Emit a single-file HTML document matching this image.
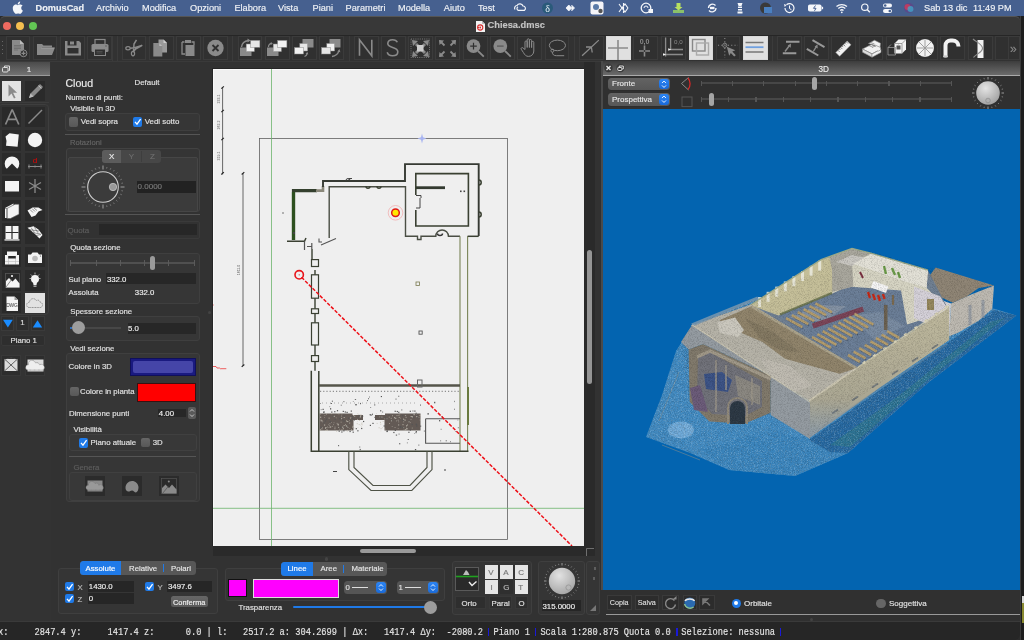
<!DOCTYPE html><html><head><meta charset='utf-8'><style>
*{margin:0;padding:0;box-sizing:border-box}
html,body{width:1024px;height:640px;overflow:hidden;background:#2b2b2b;font-family:"Liberation Sans",sans-serif;}
.a{position:absolute}
.t{position:absolute;white-space:pre;line-height:1;-webkit-text-stroke:0.15px currentColor}
body{-webkit-font-smoothing:antialiased}
#root{position:absolute;left:0;top:0;width:1024px;height:640px;will-change:transform}
svg{position:absolute;overflow:visible}
</style></head><body><div id='root'><div class="a" style="left:0px;top:0px;width:1024px;height:16px;background:#46608f"></div>
<div class="t" style="left:35.6px;top:3.5px;font-size:9.2px;color:#f0f2f6;font-weight:bold">DomusCad</div>
<div class="t" style="left:96px;top:3.5px;font-size:9.2px;color:#f0f2f6;">Archivio</div>
<div class="t" style="left:142px;top:3.5px;font-size:9.2px;color:#f0f2f6;">Modifica</div>
<div class="t" style="left:190px;top:3.5px;font-size:9.2px;color:#f0f2f6;">Opzioni</div>
<div class="t" style="left:234.4px;top:3.5px;font-size:9.2px;color:#f0f2f6;">Elabora</div>
<div class="t" style="left:278px;top:3.5px;font-size:9.2px;color:#f0f2f6;">Vista</div>
<div class="t" style="left:312.5px;top:3.5px;font-size:9.2px;color:#f0f2f6;">Piani</div>
<div class="t" style="left:345.6px;top:3.5px;font-size:9.2px;color:#f0f2f6;">Parametri</div>
<div class="t" style="left:398px;top:3.5px;font-size:9.2px;color:#f0f2f6;">Modella</div>
<div class="t" style="left:443.8px;top:3.5px;font-size:9.2px;color:#f0f2f6;">Aiuto</div>
<div class="t" style="left:478px;top:3.5px;font-size:9.2px;color:#f0f2f6;">Test</div>
<svg style="left:0px;top:0px" width="1024" height="16" viewBox="0 0 1024 16"><path d="M17.8 4.8c-.6.7-1.5 1.2-2.3 1.1-.1-.9.3-1.8.8-2.4.6-.7 1.5-1.1 2.3-1.2.1.9-.3 1.8-.8 2.5zm.8 1.3c-1.2-.1-2.3.7-2.9.7-.6 0-1.5-.7-2.5-.7-1.3 0-2.5.8-3.2 1.9-1.4 2.4-.4 5.9 1 7.8.7.9 1.4 2 2.5 1.9 1-.1 1.4-.6 2.5-.6s1.5.6 2.5.6c1.1 0 1.7-.9 2.4-1.9.7-1.1 1-2.1 1.1-2.2 0 0-2.1-.8-2.1-3.2 0-2 1.6-2.9 1.7-3-1-1.4-2.4-1.5-2.9-1.5z" fill="#f4f6fa" transform="translate(5.3 -0.3) scale(0.8)"/><path d="M515 9.5a2.6 2.6 0 0 1 2-4a3.3 3.3 0 0 1 6 0.5a2.4 2.4 0 0 1 1.5 4.3h-6.5a2 2 0 0 1 0-3.5" fill="none" stroke="#f4f6fa" stroke-width="1.2"/><circle cx="547.5" cy="8" r="5.5" fill="#2a5a7a"/><text x="547.5" y="11.5" text-anchor="middle" font-family="Liberation Serif" font-size="10" fill="#e8f0f8">δ</text><path d="M566 8l2.8-3 2.8 3-2.8 3zM571.5 5l3 3-3 3" fill="#f4f6fa" stroke="#f4f6fa" stroke-width="0.8"/><rect x="590.5" y="1.5" width="13" height="13" rx="2" fill="#f4f4f8"/><circle cx="596" cy="7" r="3" fill="#5a7aa8"/><circle cx="600.5" cy="11" r="2.2" fill="#555"/><path d="M619 4l3 4 3-4 3 4M619 12l3-4 3 4 3-4M623.5 3v10" fill="none" stroke="#f4f6fa" stroke-width="1.1"/><circle cx="646" cy="8" r="4.8" fill="none" stroke="#f4f6fa" stroke-width="1.3"/><path d="M644 8a2 2 0 0 1 4 0" fill="none" stroke="#f4f6fa" stroke-width="1"/><rect x="648.5" y="9" width="4.5" height="4" fill="#f4f6fa"/><path d="M673 10h11v3h-11z" fill="#8ac06a"/><path d="M676.5 3h4v4h2l-4 3.5-4-3.5h2z" fill="#b8e060"/><path d="M708.5 8a4 4 0 0 1 7-2.5M716 8a4 4 0 0 1-7 2.5" fill="none" stroke="#f4f6fa" stroke-width="1.3"/><rect x="710" y="6.8" width="4.5" height="2.4" fill="#f4f6fa"/><path d="M737.5 3h5l-1 3h-3zM738 6.5h4v1.5h-4zM738 9h4v1.5h-4zM737.5 11.5h5v2h-5z" fill="#f4f6fa"/><circle cx="765.5" cy="8" r="5.5" fill="#3a3a3a"/><rect x="764" y="7" width="8" height="6" fill="#4a80c0"/><path d="M785 8a4.5 4.5 0 1 0 1.5-3.3" fill="none" stroke="#f4f6fa" stroke-width="1.2"/><path d="M784 4l2.5 1-1.8 2z" fill="#f4f6fa"/><path d="M789.5 5.5v3l2 1.3" fill="none" stroke="#f4f6fa" stroke-width="1"/><rect x="808" y="4.5" width="13.5" height="7" rx="1.8" fill="#f4f6fa"/><rect x="821.8" y="6.8" width="1.3" height="2.4" fill="#f4f6fa"/><path d="M815.5 5.5l-2 2.8h2.5l-1.5 2.5" fill="none" stroke="#46608f" stroke-width="1"/><path d="M836.5 6.5a8 8 0 0 1 10.5 0M838.3 8.5a5.4 5.4 0 0 1 7 0M840.2 10.4a2.6 2.6 0 0 1 3.3 0" fill="none" stroke="#f4f6fa" stroke-width="1.3"/><circle cx="841.8" cy="12.3" r="0.9" fill="#f4f6fa"/><circle cx="864.8" cy="7.2" r="3.2" fill="none" stroke="#f4f6fa" stroke-width="1.2"/><path d="M867.2 9.6l2.6 2.6" stroke="#f4f6fa" stroke-width="1.4"/><rect x="883" y="3.5" width="9" height="4" rx="2" fill="#f4f6fa"/><rect x="883" y="9" width="9" height="4" rx="2" fill="#f4f6fa"/><circle cx="885.2" cy="5.5" r="1.3" fill="#46608f"/><circle cx="889.8" cy="11" r="1.3" fill="#46608f"/><circle cx="909" cy="8" r="5" fill="#5a4a8a"/><circle cx="907.5" cy="7" r="3" fill="#d23a5a" opacity="0.8"/><circle cx="910.5" cy="9" r="3" fill="#3ab0d0" opacity="0.7"/></svg>
<div class="t" style="left:924px;top:3.5px;font-size:9.2px;color:#f0f2f6;">Sab 13 dic</div>
<div class="t" style="left:973px;top:3.5px;font-size:9.2px;color:#f0f2f6;">11:49 PM</div>
<div class="a" style="left:0px;top:16px;width:1020px;height:19px;background:#383838;border-top:1px solid #555;border-radius:5px 5px 0 0"></div>
<div class="a" style="left:2.5px;top:21.8px;width:8.4px;height:8.4px;background:#ee6a5f;border-radius:50%"></div>
<div class="a" style="left:15.8px;top:21.8px;width:8.4px;height:8.4px;background:#f5be4f;border-radius:50%"></div>
<div class="a" style="left:29.099999999999998px;top:21.8px;width:8.4px;height:8.4px;background:#62c554;border-radius:50%"></div>
<svg style="left:474.5px;top:19.5px" width="11" height="13" viewBox="0 0 11 13"><path d="M1 1h6l3 3v8H1z" fill="#f2f2f2"/><path d="M7 1v3h3z" fill="#bbb"/><circle cx="5.2" cy="7.5" r="2.6" fill="none" stroke="#d83030" stroke-width="1.1"/><circle cx="5.2" cy="7.5" r="0.9" fill="#d83030"/><path d="M2.5 7.5h1.5" stroke="#d83030" stroke-width="1"/></svg>
<div class="t" style="left:487.5px;top:21.3px;font-size:9.3px;color:#c4c4c4;font-weight:bold">Chiesa.dmsc</div>
<div class="a" style="left:0px;top:62px;width:51px;height:560px;background:#333"></div>
<div class="a" style="left:51px;top:62px;width:550px;height:560px;background:#323232"></div>
<div class="a" style="left:0px;top:34.5px;width:1020px;height:1px;background:#262626"></div>
<div class="a" style="left:0px;top:35.5px;width:1020px;height:26px;background:#323232"></div>
<div class="a" style="left:0px;top:60.5px;width:1020px;height:1px;background:#3a3a3a"></div>
<div class="a" style="left:5.5px;top:36px;width:24.5px;height:24px;background:#303030;border:1px solid #3b3b3b"></div>
<svg style="left:5.5px;top:36px" width="25" height="25" viewBox="0 0 25 25"><path d="M6 4h8l4 4v11H6z" fill="#8a8a8a"/><path d="M14 4l4 4h-4z" fill="#bbb"/><path d="M8 9.5h7M8 11h7M8 12.5h7M8 14h4" stroke="#6f6f6f" stroke-width="0.9"/><circle cx="17.5" cy="17.3" r="3.4" fill="#303030" stroke="#8a8a8a" stroke-width="1"/><path d="M17.5 15.3v4M15.5 17.3h4" stroke="#8a8a8a" stroke-width="1.2"/></svg>
<div class="a" style="left:32.5px;top:36px;width:24.5px;height:24px;background:#303030;border:1px solid #3b3b3b"></div>
<svg style="left:32.5px;top:36px" width="25" height="25" viewBox="0 0 25 25"><path d="M4 8h5l1.5 1.5H19v2H9l-2 7.5H4z" fill="#8a8a8a"/><path d="M8 11.5h14l-3 7.5H5z" fill="#8a8a8a"/><path d="M8.2 12.2h13" stroke="#aaa" stroke-width="0.6"/></svg>
<div class="a" style="left:60px;top:36px;width:24.5px;height:24px;background:#303030;border:1px solid #3b3b3b"></div>
<svg style="left:60px;top:36px" width="25" height="25" viewBox="0 0 25 25"><path d="M5 5h14l2 2v12.5H5z" fill="#8a8a8a"/><rect x="7.5" y="5" width="9" height="4.5" fill="#303030"/><rect x="10" y="5.5" width="4" height="3" fill="#8a8a8a"/><rect x="7.5" y="12" width="11" height="5.5" fill="#303030"/></svg>
<div class="a" style="left:87px;top:36px;width:24.5px;height:24px;background:#303030;border:1px solid #3b3b3b"></div>
<svg style="left:87px;top:36px" width="25" height="25" viewBox="0 0 25 25"><rect x="8" y="3.5" width="10" height="5" fill="none" stroke="#8a8a8a" stroke-width="1.2"/><rect x="4.5" y="8" width="17" height="8" rx="1.5" fill="#8a8a8a"/><rect x="7.5" y="13" width="11" height="6.5" fill="#303030" stroke="#8a8a8a" stroke-width="1"/><path d="M9.5 15.5h6M9.5 17h6" stroke="#555" stroke-width="0.8"/><circle cx="19" cy="10" r="0.7" fill="#555"/></svg>
<div class="a" style="left:121.5px;top:36px;width:24.5px;height:24px;background:#303030;border:1px solid #3b3b3b"></div>
<svg style="left:121.5px;top:36px" width="25" height="25" viewBox="0 0 25 25"><ellipse cx="6" cy="12.3" rx="2.2" ry="1.6" fill="none" stroke="#8a8a8a" stroke-width="1.2"/><ellipse cx="11" cy="17.6" rx="1.6" ry="2.2" fill="none" stroke="#8a8a8a" stroke-width="1.2"/><path d="M8.2 12.2L12.5 11.8L19.8 9.5L13.5 13.2L11.5 15.4L12 8L14.5 3.8" fill="none" stroke="#8a8a8a" stroke-width="1.5" stroke-linejoin="round"/></svg>
<div class="a" style="left:149px;top:36px;width:24.5px;height:24px;background:#303030;border:1px solid #3b3b3b"></div>
<svg style="left:149px;top:36px" width="25" height="25" viewBox="0 0 25 25"><path d="M9.5 3.5h5l3.5 3.5v9.5H9.5z" fill="#9a9a9a"/><path d="M14.5 3.5v3.5h3.5z" fill="#ccc"/><path d="M4.3 7h6l3 3v10.5h-9z" fill="#8a8a8a"/><path d="M10.3 7v3h3z" fill="#bbb"/></svg>
<div class="a" style="left:176px;top:36px;width:24.5px;height:24px;background:#303030;border:1px solid #3b3b3b"></div>
<svg style="left:176px;top:36px" width="25" height="25" viewBox="0 0 25 25"><path d="M6 6h2.5M15.5 6H18v3M6 6v12h3" stroke="#8a8a8a" stroke-width="1.3" fill="none"/><rect x="9" y="4" width="6" height="3" fill="#8a8a8a"/><rect x="9.5" y="9" width="9" height="11" fill="#8a8a8a"/></svg>
<div class="a" style="left:203px;top:36px;width:24.5px;height:24px;background:#303030;border:1px solid #3b3b3b"></div>
<svg style="left:203px;top:36px" width="25" height="25" viewBox="0 0 25 25"><circle cx="12.5" cy="12" r="8.2" fill="#8a8a8a"/><path d="M9.5 9l6 6M15.5 9l-6 6" stroke="#303030" stroke-width="1.8"/></svg>
<div class="a" style="left:237.5px;top:36px;width:24.5px;height:24px;background:#303030;border:1px solid #3b3b3b"></div>
<svg style="left:237.5px;top:36px" width="25" height="25" viewBox="0 0 25 25"><rect x="2" y="11.5" width="11.5" height="8.5" fill="#8a8a8a"/><rect x="8.2" y="8" width="8.2" height="7.6" fill="#f2f2f2" stroke="#888" stroke-width="0.5"/><rect x="12.6" y="4.4" width="9.3" height="6.9" fill="#e6e6e6" stroke="#888" stroke-width="0.5"/><path d="M3.5 11C4 7 7 5 10.5 4.5" stroke="#8a8a8a" stroke-width="1.5" fill="none"/><path d="M9.5 2.5l3 2-3 2z" fill="#8a8a8a"/></svg>
<div class="a" style="left:265px;top:36px;width:24.5px;height:24px;background:#303030;border:1px solid #3b3b3b"></div>
<svg style="left:265px;top:36px" width="25" height="25" viewBox="0 0 25 25"><rect x="2" y="11.5" width="11.5" height="8.5" fill="#8a8a8a"/><rect x="8.2" y="8" width="8.2" height="7.6" fill="#e6e6e6" stroke="#888" stroke-width="0.5"/><rect x="12.6" y="4.4" width="9.3" height="6.9" fill="#f2f2f2" stroke="#888" stroke-width="0.5"/><path d="M3.5 11C3.5 9 5 7.5 6.5 7.5" stroke="#8a8a8a" stroke-width="1.3" fill="none"/><path d="M5.8 6l2 1.5-2 1.5z" fill="#8a8a8a"/></svg>
<div class="a" style="left:292px;top:36px;width:24.5px;height:24px;background:#303030;border:1px solid #3b3b3b"></div>
<svg style="left:292px;top:36px" width="25" height="25" viewBox="0 0 25 25"><rect x="10.5" y="3" width="11" height="8.5" fill="#8a8a8a"/><rect x="7.8" y="7.5" width="7.8" height="7.5" fill="#e6e6e6" stroke="#888" stroke-width="0.5"/><rect x="2.5" y="11.5" width="9" height="6.5" fill="#f2f2f2" stroke="#888" stroke-width="0.5"/><path d="M12.5 20.5C14 20 14.8 19 15.2 17.5" stroke="#8a8a8a" stroke-width="1.2" fill="none"/><path d="M13.5 17.5l2-1.5.8 2.5z" fill="#8a8a8a"/></svg>
<div class="a" style="left:319px;top:36px;width:24.5px;height:24px;background:#303030;border:1px solid #3b3b3b"></div>
<svg style="left:319px;top:36px" width="25" height="25" viewBox="0 0 25 25"><rect x="10.5" y="3" width="11" height="8.5" fill="#8a8a8a"/><rect x="7.8" y="7.5" width="7.8" height="7.5" fill="#f2f2f2" stroke="#888" stroke-width="0.5"/><rect x="2.5" y="11.5" width="9" height="6.5" fill="#e6e6e6" stroke="#888" stroke-width="0.5"/><path d="M13 20.5C17 20 19 17.5 20 15" stroke="#8a8a8a" stroke-width="1.3" fill="none"/><path d="M18.3 15.5l2.2-2.5.8 3.2z" fill="#8a8a8a"/></svg>
<div class="a" style="left:354px;top:36px;width:24.5px;height:24px;background:#303030;border:1px solid #3b3b3b"></div>
<svg style="left:354px;top:36px" width="25" height="25" viewBox="0 0 25 25"><path d="M5.5 19.8V3.8L17.8 19.8V3.8" fill="none" stroke="#8a8a8a" stroke-width="1.6"/></svg>
<div class="a" style="left:381px;top:36px;width:24.5px;height:24px;background:#303030;border:1px solid #3b3b3b"></div>
<svg style="left:381px;top:36px" width="25" height="25" viewBox="0 0 25 25"><path d="M16.3 6.3C15.5 4.5 13.8 3.7 11.6 3.7C8.6 3.7 6.8 5.3 6.8 7.6C6.8 12.5 16.8 10.5 16.8 15.7C16.8 18.2 14.6 19.8 11.5 19.8C8.8 19.8 6.8 18.5 6.2 16.3" fill="none" stroke="#8a8a8a" stroke-width="1.6"/></svg>
<div class="a" style="left:408px;top:36px;width:24.5px;height:24px;background:#303030;border:1px solid #3b3b3b"></div>
<svg style="left:408px;top:36px" width="25" height="25" viewBox="0 0 25 25"><rect x="3" y="3" width="18.5" height="18.5" fill="none" stroke="#8a8a8a" stroke-width="0.8" stroke-dasharray="1 1.2"/><path d="M4 4l6 1-5 5z M21 4l-1 6-5-5z M4 21l1-6 5 5z M21 21l-6-1 5-5z" fill="#8a8a8a"/><path d="M8 8l9 9M17 8l-9 9" stroke="#8a8a8a" stroke-width="3"/><rect x="9" y="9" width="6.5" height="6.5" fill="#ccc"/></svg>
<div class="a" style="left:435px;top:36px;width:24.5px;height:24px;background:#303030;border:1px solid #3b3b3b"></div>
<svg style="left:435px;top:36px" width="25" height="25" viewBox="0 0 25 25"><path d="M4 4l5 0.5-4.5 4.5z M21 4l-0.5 5-4.5-4.5z M4 21l0.5-5 4.5 4.5z M21 21l-5-0.5 4.5-4.5z" fill="#8a8a8a"/><path d="M5 5l4.5 4.5M20 5l-4.5 4.5M5 20l4.5-4.5M20 20l-4.5-4.5" stroke="#8a8a8a" stroke-width="1.8"/></svg>
<div class="a" style="left:463px;top:36px;width:24.5px;height:24px;background:#303030;border:1px solid #3b3b3b"></div>
<svg style="left:463px;top:36px" width="25" height="25" viewBox="0 0 25 25"><path d="M15 15l5.8 5.6" stroke="#8a8a8a" stroke-width="1.8"/><circle cx="10.5" cy="10.1" r="6.9" fill="#8a8a8a"/><path d="M10.5 6.8v6.6M7.2 10.1h6.6" stroke="#303030" stroke-width="1.2"/></svg>
<div class="a" style="left:490px;top:36px;width:24.5px;height:24px;background:#303030;border:1px solid #3b3b3b"></div>
<svg style="left:490px;top:36px" width="25" height="25" viewBox="0 0 25 25"><path d="M15 15l5.8 5.6" stroke="#8a8a8a" stroke-width="1.8"/><circle cx="10.3" cy="10.1" r="6.9" fill="#8a8a8a"/><path d="M7 10.1h6.6" stroke="#555" stroke-width="1.2"/></svg>
<div class="a" style="left:517px;top:36px;width:24.5px;height:24px;background:#303030;border:1px solid #3b3b3b"></div>
<svg style="left:517px;top:36px" width="25" height="25" viewBox="0 0 25 25"><path d="M8 13.5V6a1.1 1.1 0 0 1 2.2 0V11.5V3.9a1.1 1.1 0 0 1 2.2 0V11.5V4.6a1.1 1.1 0 0 1 2.2 0v7V6.5a1.1 1.1 0 0 1 2.2 0v8.5c0 3-2.2 5.4-5.2 5.4c-2.6 0-3.8-1.4-5.3-4l-2.1-3.2a1.1 1.1 0 0 1 1.9-1.1z" fill="none" stroke="#8a8a8a" stroke-width="1"/></svg>
<div class="a" style="left:544.5px;top:36px;width:24.5px;height:24px;background:#303030;border:1px solid #3b3b3b"></div>
<svg style="left:544.5px;top:36px" width="25" height="25" viewBox="0 0 25 25"><ellipse cx="12.4" cy="9.4" rx="8.1" ry="5.3" fill="none" stroke="#8a8a8a" stroke-width="1"/><circle cx="7.4" cy="14.7" r="1.5" fill="none" stroke="#8a8a8a" stroke-width="0.9"/><path d="M7.4 16.2c0 2.5 1.5 3.5 4 3.5h7.8" fill="none" stroke="#8a8a8a" stroke-width="1"/></svg>
<div class="a" style="left:579px;top:36px;width:24.5px;height:24px;background:#303030;border:1px solid #3b3b3b"></div>
<svg style="left:579px;top:36px" width="25" height="25" viewBox="0 0 25 25"><path d="M3.1 19.8L19.8 4.1M7 11h6M12.3 10.5L13.2 16.5" fill="none" stroke="#8a8a8a" stroke-width="1.3"/></svg>
<div class="a" style="left:606px;top:36px;width:24.5px;height:24px;background:#e0e0e0;border:1px solid #d8d8d8"></div>
<svg style="left:606px;top:36px" width="25" height="25" viewBox="0 0 25 25"><path d="M12 4v20M2 12h20" stroke="#8a8a8a" stroke-width="1.6"/></svg>
<div class="a" style="left:633px;top:36px;width:24.5px;height:24px;background:#303030;border:1px solid #3b3b3b"></div>
<svg style="left:633px;top:36px" width="25" height="25" viewBox="0 0 25 25"><path d="M11.5 9.5v11M6 15h11" stroke="#8a8a8a" stroke-width="1.6"/><circle cx="11.5" cy="15" r="0.9" fill="#333"/><text x="11.5" y="8.3" text-anchor="middle" font-family="Liberation Sans" font-size="7" font-weight="bold" fill="#8a8a8a">0,0</text></svg>
<div class="a" style="left:661px;top:36px;width:24.5px;height:24px;background:#303030;border:1px solid #3b3b3b"></div>
<svg style="left:661px;top:36px" width="25" height="25" viewBox="0 0 25 25"><path d="M4.6 1.5V20.5M2.8 18.5H22M9.6 2V13.5H22" fill="none" stroke="#8a8a8a" stroke-width="1.3"/><path d="M2 17.3l3.2 1.2-3.2 1.2zM7.2 12.3l3.2 1.2-3.2 1.2z" fill="#f2f2f2"/><text x="17.3" y="8.3" text-anchor="middle" font-family="Liberation Sans" font-size="6.2" fill="#8a8a8a">0,0</text></svg>
<div class="a" style="left:688.5px;top:36px;width:24.5px;height:24px;background:#e0e0e0;border:1px solid #d8d8d8"></div>
<svg style="left:688.5px;top:36px" width="25" height="25" viewBox="0 0 25 25"><rect x="3.5" y="3.5" width="12.5" height="11.5" fill="none" stroke="#888" stroke-width="1.4"/><rect x="7.5" y="7" width="12" height="12" fill="none" stroke="#aaa" stroke-width="1.4"/></svg>
<div class="a" style="left:715.5px;top:36px;width:24.5px;height:24px;background:#303030;border:1px solid #3b3b3b"></div>
<svg style="left:715.5px;top:36px" width="25" height="25" viewBox="0 0 25 25"><path d="M2 9.3h20M8.8 2v20" stroke="#8a8a8a" stroke-width="1.1" stroke-dasharray="1.1 2.2"/><circle cx="8.8" cy="9.3" r="2.1" fill="none" stroke="#8a8a8a" stroke-width="0.9"/><path d="M10.8 10.8L19.3 14.2L16.3 15.6L19.8 19.2L18.2 20.6L14.8 17L13.2 19.8z" fill="#8a8a8a"/></svg>
<div class="a" style="left:743px;top:36px;width:24.5px;height:24px;background:#e0e0e0;border:1px solid #d8d8d8"></div>
<svg style="left:743px;top:36px" width="25" height="25" viewBox="0 0 25 25"><path d="M2.5 6.5h18M2.5 16h18" stroke="#777" stroke-width="1.4"/><path d="M2.5 11.2h18" stroke="#6fa0e0" stroke-width="1.8"/></svg>
<div class="a" style="left:777px;top:36px;width:24.5px;height:24px;background:#303030;border:1px solid #3b3b3b"></div>
<svg style="left:777px;top:36px" width="25" height="25" viewBox="0 0 25 25"><path d="M9 5.8h13.5M5.8 17.2h13.5" stroke="#999" stroke-width="2"/><path d="M8 15.5L12.5 9.5" stroke="#8a8a8a" stroke-width="1.4"/><path d="M14 7.5l-0.3 4.3-3-2.2z" fill="#8a8a8a"/></svg>
<div class="a" style="left:804.4px;top:36px;width:24.5px;height:24px;background:#303030;border:1px solid #3b3b3b"></div>
<svg style="left:804.4px;top:36px" width="25" height="25" viewBox="0 0 25 25"><path d="M8.5 4.2L20.5 11.2M2.8 12.8L14.3 19.5" stroke="#999" stroke-width="2"/><path d="M9.3 15.5L12.5 10.3" stroke="#8a8a8a" stroke-width="1.4"/><path d="M13.5 8.3l0.2 4.3-3.1-1.8z" fill="#8a8a8a"/></svg>
<div class="a" style="left:831px;top:36px;width:24.5px;height:24px;background:#303030;border:1px solid #3b3b3b"></div>
<svg style="left:831px;top:36px" width="25" height="25" viewBox="0 0 25 25"><path d="M4.8 16.5L16.2 5l3.8 3.8L8.6 20.3z" fill="#f2f2f2" stroke="#999" stroke-width="0.6"/><path d="M7 14.3l1.6 1.6M8.4 12.9l1 1M9.8 11.5l1.6 1.6M11.2 10.1l1 1M12.6 8.7l1.6 1.6M14 7.3l1 1M15.4 5.9l1.6 1.6" stroke="#555" stroke-width="0.7"/></svg>
<div class="a" style="left:858.5px;top:36px;width:24.5px;height:24px;background:#303030;border:1px solid #3b3b3b"></div>
<svg style="left:858.5px;top:36px" width="25" height="25" viewBox="0 0 25 25"><path d="M3.5 13l9-4.5 9.5 4.5-9 4.8z" fill="#f2f2f2" stroke="#888" stroke-width="0.6"/><path d="M3.5 13v3.2l9.5 5v-3.3z" fill="#ddd" stroke="#888" stroke-width="0.6"/><path d="M13 18v3.2l9-4.8v-3.2z" fill="#f2f2f2" stroke="#888" stroke-width="0.6"/><path d="M9.5 7.5l6-3.3 6 3-0.5 4.5-5.5-2.5z" fill="#f2f2f2" stroke="#888" stroke-width="0.6"/><path d="M9.5 9.5l4 1.5M10.5 8l4 1.5M11.5 6.5l4 1.5M13 11.5l3-1.5" stroke="#666" stroke-width="0.6"/><path d="M16 9l5.5 2.5v2.5l-2.5 1.3" fill="#f2f2f2" stroke="#888" stroke-width="0.6"/></svg>
<div class="a" style="left:886px;top:36px;width:24.5px;height:24px;background:#303030;border:1px solid #3b3b3b"></div>
<svg style="left:886px;top:36px" width="25" height="25" viewBox="0 0 25 25"><path d="M12.5 3.5h7.5v10l-4 4h-7.5v-10z" fill="#f2f2f2"/><path d="M8.5 7.5h7.5v10M16 7.5l4-4" stroke="#888" stroke-width="0.8" fill="none"/><rect x="10.5" y="9.5" width="4" height="4" fill="#555"/><path d="M2 11.5h7.5v7.5H2zM2 11.5l3-3M9.5 11.5l3-3" stroke="#999" stroke-width="0.8" fill="none"/></svg>
<div class="a" style="left:913px;top:36px;width:24.5px;height:24px;background:#303030;border:1px solid #3b3b3b"></div>
<svg style="left:913px;top:36px" width="25" height="25" viewBox="0 0 25 25"><circle cx="12" cy="12" r="9" fill="#f2f2f2"/><path d="M12 3.5v17M3.5 12h17M6 6l12 12M18 6L6 18" stroke="#999" stroke-width="0.9"/></svg>
<div class="a" style="left:940px;top:36px;width:24.5px;height:24px;background:#303030;border:1px solid #3b3b3b"></div>
<svg style="left:940px;top:36px" width="25" height="25" viewBox="0 0 25 25"><path d="M5.5 21V9.5a5 5 0 0 1 5-5h2a6 6 0 0 1 6 6" fill="none" stroke="#f2f2f2" stroke-width="4"/><ellipse cx="5.5" cy="20.5" rx="2.5" ry="1.2" fill="#ccc"/></svg>
<div class="a" style="left:968px;top:36px;width:24.5px;height:24px;background:#303030;border:1px solid #3b3b3b"></div>
<svg style="left:968px;top:36px" width="25" height="25" viewBox="0 0 25 25"><rect x="9.5" y="4" width="6" height="18" fill="#f2f2f2"/><path d="M5 3c3 3 9 5 9.5 9S8 18 5.5 21.5" fill="none" stroke="#8a8a8a" stroke-width="1.1"/></svg>
<div class="a" style="left:995px;top:36px;width:24.5px;height:24px;background:#303030;border:1px solid #3b3b3b"></div>
<div class="a" style="left:1008px;top:36px;width:12px;height:24px;background:#303030;border:1px solid #3b3b3b"></div>
<div class="a" style="left:112px;top:36px;width:1px;height:24.5px;background:#3b3b3b"></div>
<div class="a" style="left:116.5px;top:36px;width:1px;height:24.5px;background:#3b3b3b"></div>
<div class="a" style="left:232px;top:36px;width:1px;height:24.5px;background:#3b3b3b"></div>
<div class="a" style="left:348.5px;top:36px;width:1px;height:24.5px;background:#3b3b3b"></div>
<div class="a" style="left:573.5px;top:36px;width:1px;height:24.5px;background:#3b3b3b"></div>
<div class="a" style="left:772px;top:36px;width:1px;height:24.5px;background:#3b3b3b"></div>
<div class="a" style="left:2.2px;top:41px;width:1px;height:1px;background:#666"></div>
<div class="a" style="left:2.2px;top:45px;width:1px;height:1px;background:#666"></div>
<div class="a" style="left:2.2px;top:49px;width:1px;height:1px;background:#666"></div>
<div class="a" style="left:2.2px;top:53px;width:1px;height:1px;background:#666"></div>
<div class="t" style="left:1010px;top:43px;font-size:12px;color:#888;">»</div>
<div class="a" style="left:0px;top:62.2px;width:50px;height:13.6px;background:linear-gradient(#4b4b4b,#727272);border-bottom:1px solid #9a9a9a"></div>
<div class="a" style="left:0px;top:102px;width:49px;height:1px;background:#3c3c3c"></div>
<svg style="left:1px;top:64px" width="10" height="10" viewBox="0 0 10 10"><rect x="1.5" y="3.5" width="5.5" height="4.5" rx="1" fill="none" stroke="#ddd" stroke-width="1"/><path d="M3.5 3V2h5v4.5h-1" fill="none" stroke="#ddd" stroke-width="1"/></svg>
<div class="t" style="left:26.8px;top:66.43px;font-size:8px;color:#e8e8e8;">1</div>
<div class="a" style="left:-2px;top:103.5px;width:50.5px;height:211px;border:1px solid #3e3e3e;border-radius:4px"></div>
<div class="a" style="left:1.5px;top:80.5px;width:19.8px;height:20.5px;background:#e2e2e2"></div>
<svg style="left:1.5px;top:80.5px" width="20" height="20" viewBox="0 0 20 20"><path d="M6.5 3.5v12l3-3 2.5 5 1.6-.8-2.5-5h4z" fill="#8a8a8a"/></svg>
<div class="a" style="left:25px;top:80.5px;width:19.8px;height:20.5px;background:#2a2a2a"></div>
<svg style="left:25px;top:80.5px" width="20" height="20" viewBox="0 0 20 20"><path d="M4 17l1.5-4.5L15 3l3 3-9.5 9.5z" fill="#8a8a8a"/><path d="M4 17l1.5-4.5 3 3z" fill="#bbb"/><path d="M13.5 4.5l3 3" stroke="#ccc" stroke-width="0.8"/></svg>
<div class="a" style="left:1.5px;top:106.5px;width:19.8px;height:20.5px;background:#2a2a2a"></div>
<svg style="left:1.5px;top:106.5px" width="20" height="20" viewBox="0 0 20 20"><path d="M3.5 17.5L10 3h0.4L16.8 17.5M5.8 12.3h9" fill="none" stroke="#8a8a8a" stroke-width="1.7"/></svg>
<div class="a" style="left:25px;top:106.5px;width:19.8px;height:20.5px;background:#2a2a2a"></div>
<svg style="left:25px;top:106.5px" width="20" height="20" viewBox="0 0 20 20"><path d="M3.5 16.5L17 3" stroke="#8a8a8a" stroke-width="1.5"/></svg>
<div class="a" style="left:1.5px;top:130px;width:19.8px;height:20.5px;background:#2a2a2a"></div>
<svg style="left:1.5px;top:130px" width="20" height="20" viewBox="0 0 20 20"><path d="M3.5 6.5L7.5 3.3L16.8 4.5L15.6 16.8L4 15.8L4.5 11z" fill="#f4f4f4"/></svg>
<div class="a" style="left:25px;top:130px;width:19.8px;height:20.5px;background:#2a2a2a"></div>
<svg style="left:25px;top:130px" width="20" height="20" viewBox="0 0 20 20"><circle cx="10" cy="10" r="7.2" fill="#f4f4f4"/></svg>
<div class="a" style="left:1.5px;top:153px;width:19.8px;height:20.5px;background:#2a2a2a"></div>
<svg style="left:1.5px;top:153px" width="20" height="20" viewBox="0 0 20 20"><path d="M4.8 15.8A7.3 7.3 0 1 1 15.2 15.8L10 10.5z" fill="#f4f4f4"/></svg>
<div class="a" style="left:25px;top:153px;width:19.8px;height:20.5px;background:#2a2a2a"></div>
<svg style="left:25px;top:153px" width="20" height="20" viewBox="0 0 20 20"><path d="M3 13.5h14M4 11.5v4M16 11.5v4M10 12.5v2" stroke="#8a8a8a" stroke-width="1"/><text x="10" y="10" text-anchor="middle" font-family="Liberation Sans" font-size="8" fill="#e00">d</text></svg>
<div class="a" style="left:1.5px;top:176px;width:19.8px;height:20.5px;background:#2a2a2a"></div>
<svg style="left:1.5px;top:176px" width="20" height="20" viewBox="0 0 20 20"><rect x="3" y="5" width="14" height="10.5" fill="#f4f4f4"/></svg>
<div class="a" style="left:25px;top:176px;width:19.8px;height:20.5px;background:#2a2a2a"></div>
<svg style="left:25px;top:176px" width="20" height="20" viewBox="0 0 20 20"><path d="M10 3v14M4 6.5l12 7M4 13.5l12-7" stroke="#8a8a8a" stroke-width="1.3"/></svg>
<div class="a" style="left:1.5px;top:200px;width:19.8px;height:20.5px;background:#2a2a2a"></div>
<svg style="left:1.5px;top:200px" width="20" height="20" viewBox="0 0 20 20"><path d="M3 8l8.5-4.5v10L5 18H3z" fill="#f4f4f4"/><path d="M5 8.5l8-4.3H17v10L8.5 18.5H5z" fill="#f4f4f4" stroke="#555" stroke-width="0.6"/><path d="M5 8.5v10M5 8.5H3" stroke="#555" stroke-width="0.6"/></svg>
<div class="a" style="left:25px;top:200px;width:19.8px;height:20.5px;background:#2a2a2a"></div>
<svg style="left:25px;top:200px" width="20" height="20" viewBox="0 0 20 20"><path d="M2.5 10.5l5-3h6l4 2.5-4 1.5-3 4-4 1.5z" fill="#f4f4f4"/><path d="M5 9.5l3 3M7 8.5l3 3M9 8l3 2.5" stroke="#666" stroke-width="0.7"/></svg>
<div class="a" style="left:1.5px;top:223px;width:19.8px;height:20.5px;background:#2a2a2a"></div>
<svg style="left:1.5px;top:223px" width="20" height="20" viewBox="0 0 20 20"><rect x="3.5" y="3" width="13" height="13" fill="#f4f4f4"/><path d="M10 3v13M3.5 9.5h13" stroke="#2a2a2a" stroke-width="1.2"/><rect x="2.5" y="16" width="15" height="1.8" fill="#bbb"/></svg>
<div class="a" style="left:25px;top:223px;width:19.8px;height:20.5px;background:#2a2a2a"></div>
<svg style="left:25px;top:223px" width="20" height="20" viewBox="0 0 20 20"><path d="M2.5 4.8L8.5 3.2L13.5 6.5L17.5 12L14.5 15.5L10.5 11.5L6.5 8z" fill="#f4f4f4"/><path d="M6 4.5l3.5 5M9.5 4.3l3.5 5.5M3.5 6.5l10.5 1.5M7 9.5l8.5 1.5M11 12.5l5 -1" stroke="#555" stroke-width="0.6"/></svg>
<div class="a" style="left:1.5px;top:246.5px;width:19.8px;height:20.5px;background:#2a2a2a"></div>
<svg style="left:1.5px;top:246.5px" width="20" height="20" viewBox="0 0 20 20"><path d="M5 4.5h10v4.5H5z" fill="#f4f4f4"/><path d="M3 8h3.2v9.5H3zM13.8 8H17v9.5h-3.2z" fill="#f4f4f4"/><path d="M6.2 11.5h7.6v6H6.2z" fill="#f4f4f4"/><path d="M3 14.5h14" stroke="#bbb" stroke-width="0.6"/></svg>
<div class="a" style="left:25px;top:246.5px;width:19.8px;height:20.5px;background:#2a2a2a"></div>
<svg style="left:25px;top:246.5px" width="20" height="20" viewBox="0 0 20 20"><path d="M3 7.5h3l1.5-2h5L14 7.5h3V16H3z" fill="#f4f4f4"/><circle cx="10" cy="11.5" r="2.8" fill="#bbb"/><circle cx="15.5" cy="9" r="0.6" fill="#555"/></svg>
<div class="a" style="left:1.5px;top:270px;width:19.8px;height:20.5px;background:#2a2a2a"></div>
<svg style="left:1.5px;top:270px" width="20" height="20" viewBox="0 0 20 20"><rect x="3.5" y="3.5" width="14" height="14" fill="none" stroke="#555" stroke-width="0.8"/><path d="M4 17.5V11l3-3 3.5 3.5 3-3 4 5v4z" fill="#f4f4f4"/><circle cx="10" cy="6" r="1.1" fill="#f4f4f4"/><path d="M4 17l6-8" stroke="#444" stroke-width="0.6"/></svg>
<div class="a" style="left:25px;top:270px;width:19.8px;height:20.5px;background:#2a2a2a"></div>
<svg style="left:25px;top:270px" width="20" height="20" viewBox="0 0 20 20"><circle cx="10" cy="9" r="4" fill="#f4f4f4"/><path d="M7.8 11.5h4.4l-.7 3.5h-3z" fill="#f4f4f4"/><rect x="8.5" y="15.5" width="3" height="1.3" fill="#bbb"/><path d="M10 2.5v2M4.5 8.5h2M13.5 8.5h2M5.8 4.5l1.3 1.3M14.2 4.5l-1.3 1.3" stroke="#ccc" stroke-width="0.8"/></svg>
<div class="a" style="left:1.5px;top:292.5px;width:19.8px;height:20.5px;background:#2a2a2a"></div>
<svg style="left:1.5px;top:292.5px" width="20" height="20" viewBox="0 0 20 20"><path d="M4.5 3.5h8l3.5 3.5v11h-11.5z" fill="#f4f4f4"/><path d="M12.5 3.5v3.5h3.5z" fill="#999"/><text x="10" y="14" text-anchor="middle" font-family="Liberation Sans" font-size="4.8" fill="#333">DWG</text></svg>
<div class="a" style="left:25px;top:292.5px;width:19.8px;height:20.5px;background:#e2e2e2"></div>
<svg style="left:25px;top:292.5px" width="20" height="20" viewBox="0 0 20 20"><path d="M4 14.5a2.6 2.6 0 0 1 0.5-5.2a3.6 3.6 0 0 1 6.8-1.7a2.6 2.6 0 0 1 4 1.8a2.6 2.6 0 0 1 0.3 5.1z" fill="none" stroke="#777" stroke-width="0.8" stroke-dasharray="1 0.6"/></svg>
<div class="a" style="left:0.5px;top:315.5px;width:13.5px;height:15.8px;background:#2e2e2e;border:1px solid #3a3a3a"></div>
<div class="a" style="left:15.8px;top:315.5px;width:13.7px;height:15.8px;background:#2e2e2e;border:1px solid #3a3a3a"></div>
<div class="a" style="left:30.8px;top:315.5px;width:13.999999999999996px;height:15.8px;background:#2e2e2e;border:1px solid #3a3a3a"></div>
<svg style="left:0px;top:315.5px" width="45" height="16" viewBox="0 0 45 16"><path d="M3 3.8h9.8L7.9 11.5z" fill="#1a8cff"/><path d="M32.8 11.5h9.4L37.5 4.3z" fill="#1a8cff"/></svg>
<div class="t" style="left:20.3px;top:319.43px;font-size:8px;color:#ddd;">1</div>
<div class="a" style="left:1px;top:334.9px;width:43.8px;height:11.1px;background:#2e2e2e;border:1px solid #383838;border-radius:2px"></div>
<div class="t" style="left:10.5px;top:336.8px;font-size:7.8px;color:#e0e0e0;">Piano 1</div>
<div class="a" style="left:1px;top:354.8px;width:20.3px;height:20.8px;background:#2d2d2d;border:1px solid #383838"></div>
<div class="a" style="left:24.6px;top:354.8px;width:20.4px;height:20.8px;background:#2d2d2d;border:1px solid #383838"></div>
<svg style="left:1px;top:355px" width="20" height="20" viewBox="0 0 20 20"><rect x="3.5" y="4" width="13" height="12" fill="#ddd"/><path d="M3.5 4l13 12M16.5 4l-13 12" stroke="#444" stroke-width="0.8"/><path d="M3.5 7a6.5 4 0 0 1 13 0" fill="none" stroke="#777" stroke-width="0.6" stroke-dasharray="0.8 0.6"/></svg>
<svg style="left:24.6px;top:355px" width="20" height="20" viewBox="0 0 20 20"><rect x="2.5" y="4.5" width="16" height="12" fill="#ddd"/><path d="M3 15a2.6 2.6 0 0 1 0.5-5.2a3.6 3.6 0 0 1 7-1.7a2.6 2.6 0 0 1 4 1.8a2.6 2.6 0 0 1 3.5 5.1z" fill="#eee" stroke="#666" stroke-width="0.6" stroke-dasharray="0.8 0.5"/></svg>
<div class="t" style="left:65.4px;top:77.83px;font-size:10.6px;color:#ececec;">Cloud</div>
<div class="t" style="left:134.6px;top:78.85px;font-size:7.85px;color:#e2e2e2;">Default</div>
<div class="t" style="left:65.6px;top:93.6px;font-size:7.8px;color:#e2e2e2;">Numero di punti:</div>
<div class="t" style="left:70.3px;top:104.8px;font-size:7.8px;color:#e2e2e2;">Visibile in 3D</div>
<div class="a" style="left:65.4px;top:113.2px;width:134.3px;height:17.5px;background:#363636;border:1px solid #3f3f3f;border-radius:3px"></div>
<div class="a" style="left:68.7px;top:117.2px;width:9.2px;height:9.4px;background:linear-gradient(#666,#585858);border-radius:2px"></div>
<div class="t" style="left:80.7px;top:118.41px;font-size:7.9px;color:#e2e2e2;">Vedi sopra</div>
<div class="a" style="left:132.9px;top:117.3px;width:9.2px;height:9.4px;background:#1f7ae8;border-radius:2px"></div>
<svg style="left:132.9px;top:117.3px" width="9.2" height="9.4" viewBox="0 0 9.2 9.4"><path d="M2 4.8l2 2.4 3.6-5" fill="none" stroke="#fff" stroke-width="1.3"/></svg>
<div class="t" style="left:144.7px;top:118.41px;font-size:7.9px;color:#e2e2e2;">Vedi sotto</div>
<div class="a" style="left:65.4px;top:134px;width:134.3px;height:1.2px;background:#555"></div>
<div class="t" style="left:70px;top:138.72px;font-size:7.6px;color:#666;">Rotazioni</div>
<div class="a" style="left:65.6px;top:147.5px;width:134.1px;height:64px;background:#353535;border:1px solid #424242;border-radius:3px"></div>
<div class="a" style="left:67.5px;top:156.5px;width:130.5px;height:55px;background:#3b3b3b;border:1px solid #464646;border-radius:2px"></div>
<div class="a" style="left:102.25px;top:149.6px;width:58.75px;height:13.2px;background:#474747;border-radius:3px"></div>
<div class="a" style="left:102.25px;top:149.6px;width:19px;height:13.2px;background:#5c5c5c;border-radius:3px 0 0 3px"></div>
<div class="a" style="left:141.3px;top:150.5px;width:0.8px;height:11.5px;background:#3e3e3e"></div>
<div class="t" style="left:109px;top:153.13px;font-size:8px;color:#f0f0f0;">X</div>
<div class="t" style="left:128.8px;top:153.13px;font-size:8px;color:#6e6e6e;">Y</div>
<div class="t" style="left:150px;top:153.13px;font-size:8px;color:#6e6e6e;">Z</div>
<svg style="left:82.9px;top:166.9px" width="40" height="40" viewBox="0 0 40 40"><path d="M37.50 20.00L41.50 20.00" stroke="#8a8a8a" stroke-width="1.3"/><path d="M38.44 23.67L39.91 23.96" stroke="#8a8a8a" stroke-width="0.8"/><path d="M37.37 27.19L38.75 27.77" stroke="#8a8a8a" stroke-width="0.8"/><path d="M35.63 30.44L36.88 31.28" stroke="#8a8a8a" stroke-width="0.8"/><path d="M33.29 33.29L34.35 34.35" stroke="#8a8a8a" stroke-width="0.8"/><path d="M30.44 35.63L31.28 36.88" stroke="#8a8a8a" stroke-width="0.8"/><path d="M27.19 37.37L27.77 38.75" stroke="#8a8a8a" stroke-width="0.8"/><path d="M23.67 38.44L23.96 39.91" stroke="#8a8a8a" stroke-width="0.8"/><path d="M20.00 37.50L20.00 41.50" stroke="#8a8a8a" stroke-width="1.3"/><path d="M16.33 38.44L16.04 39.91" stroke="#8a8a8a" stroke-width="0.8"/><path d="M12.81 37.37L12.23 38.75" stroke="#8a8a8a" stroke-width="0.8"/><path d="M9.56 35.63L8.72 36.88" stroke="#8a8a8a" stroke-width="0.8"/><path d="M6.71 33.29L5.65 34.35" stroke="#8a8a8a" stroke-width="0.8"/><path d="M4.37 30.44L3.12 31.28" stroke="#8a8a8a" stroke-width="0.8"/><path d="M2.63 27.19L1.25 27.77" stroke="#8a8a8a" stroke-width="0.8"/><path d="M1.56 23.67L0.09 23.96" stroke="#8a8a8a" stroke-width="0.8"/><path d="M2.50 20.00L-1.50 20.00" stroke="#8a8a8a" stroke-width="1.3"/><path d="M1.56 16.33L0.09 16.04" stroke="#8a8a8a" stroke-width="0.8"/><path d="M2.63 12.81L1.25 12.23" stroke="#8a8a8a" stroke-width="0.8"/><path d="M4.37 9.56L3.12 8.72" stroke="#8a8a8a" stroke-width="0.8"/><path d="M6.71 6.71L5.65 5.65" stroke="#8a8a8a" stroke-width="0.8"/><path d="M9.56 4.37L8.72 3.12" stroke="#8a8a8a" stroke-width="0.8"/><path d="M12.81 2.63L12.23 1.25" stroke="#8a8a8a" stroke-width="0.8"/><path d="M16.33 1.56L16.04 0.09" stroke="#8a8a8a" stroke-width="0.8"/><path d="M20.00 2.50L20.00 -1.50" stroke="#8a8a8a" stroke-width="1.3"/><path d="M23.67 1.56L23.96 0.09" stroke="#8a8a8a" stroke-width="0.8"/><path d="M27.19 2.63L27.77 1.25" stroke="#8a8a8a" stroke-width="0.8"/><path d="M30.44 4.37L31.28 3.12" stroke="#8a8a8a" stroke-width="0.8"/><path d="M33.29 6.71L34.35 5.65" stroke="#8a8a8a" stroke-width="0.8"/><path d="M35.63 9.56L36.88 8.72" stroke="#8a8a8a" stroke-width="0.8"/><path d="M37.37 12.81L38.75 12.23" stroke="#8a8a8a" stroke-width="0.8"/><path d="M38.44 16.33L39.91 16.04" stroke="#8a8a8a" stroke-width="0.8"/><circle cx="20" cy="20" r="15.3" fill="none" stroke="#d0d0d0" stroke-width="1.1"/><circle cx="30" cy="20" r="3.7" fill="#999" stroke="#c4c4c4" stroke-width="0.8"/></svg>
<div class="a" style="left:137px;top:180.8px;width:59px;height:12px;background:#222"></div>
<div class="t" style="left:137.6px;top:183.43px;font-size:8px;color:#7a7a7a;">0.0000</div>
<div class="a" style="left:65.3px;top:214px;width:134.4px;height:1.2px;background:#555"></div>
<div class="a" style="left:65.5px;top:220.8px;width:134.2px;height:18.5px;background:#323232;border:1px solid #3a3a3a;border-radius:2px"></div>
<div class="t" style="left:67.5px;top:226.63px;font-size:8px;color:#5d5d5d;">Quota</div>
<div class="a" style="left:98.75px;top:223.6px;width:98.2px;height:11.3px;background:#272727"></div>
<div class="t" style="left:70.2px;top:243.7px;font-size:7.8px;color:#e2e2e2;">Quota sezione</div>
<div class="a" style="left:65.5px;top:252.5px;width:134.2px;height:51.5px;background:#363636;border:1px solid #3f3f3f;border-radius:3px"></div>
<div class="a" style="left:70.6px;top:262px;width:124px;height:1.6px;background:#505050"></div>
<div class="a" style="left:70.1px;top:259.5px;width:1px;height:6px;background:#5a5a5a"></div>
<div class="a" style="left:95.9px;top:259.5px;width:1px;height:6px;background:#5a5a5a"></div>
<div class="a" style="left:120.1px;top:259.5px;width:1px;height:6px;background:#5a5a5a"></div>
<div class="a" style="left:144.2px;top:259.5px;width:1px;height:6px;background:#5a5a5a"></div>
<div class="a" style="left:168.25px;top:259.5px;width:1px;height:6px;background:#5a5a5a"></div>
<div class="a" style="left:194.2px;top:259.5px;width:1px;height:6px;background:#5a5a5a"></div>
<div class="a" style="left:149.7px;top:256px;width:5px;height:13.6px;background:#9a9a9a;border-radius:2.5px"></div>
<div class="t" style="left:68.6px;top:275.55px;font-size:7.8px;color:#e2e2e2;">Sul piano</div>
<div class="a" style="left:106px;top:273.3px;width:90.1px;height:11px;background:#272727"></div>
<div class="t" style="left:106.9px;top:275.55px;font-size:7.8px;color:#f0f0f0;">332.0</div>
<div class="t" style="left:68.6px;top:288.5px;font-size:7.8px;color:#e2e2e2;">Assoluta</div>
<div class="t" style="left:134.8px;top:288.7px;font-size:7.8px;color:#f0f0f0;">332.0</div>
<div class="t" style="left:70.2px;top:307.55px;font-size:7.8px;color:#e2e2e2;">Spessore sezione</div>
<div class="a" style="left:65.5px;top:316.4px;width:134.2px;height:25px;background:#363636;border:1px solid #3f3f3f;border-radius:3px"></div>
<div class="a" style="left:70px;top:326.8px;width:51px;height:1.8px;background:#474747"></div>
<div class="a" style="left:70px;top:326.5px;width:2px;height:2px;background:#2a7be0;border-radius:1px"></div>
<div class="a" style="left:71.9px;top:321.2px;width:13px;height:13px;background:#9d9d9d;border-radius:50%"></div>
<div class="a" style="left:127.5px;top:322.7px;width:68.5px;height:11.3px;background:#272727"></div>
<div class="t" style="left:128px;top:324.6px;font-size:7.8px;color:#f0f0f0;">5.0</div>
<div class="t" style="left:70.2px;top:344.8px;font-size:7.8px;color:#e2e2e2;">Vedi sezione</div>
<div class="a" style="left:65.5px;top:353.4px;width:134.2px;height:149px;background:#363636;border:1px solid #3f3f3f;border-radius:3px"></div>
<div class="t" style="left:68.6px;top:362.55px;font-size:7.8px;color:#e2e2e2;">Colore in 3D</div>
<div class="a" style="left:130px;top:358.1px;width:65.6px;height:18.4px;background:#1a1a80;border:1px solid #10105a"></div>
<div class="a" style="left:132.5px;top:360.6px;width:60px;height:12.9px;background:#4545a8;border-radius:2px"></div>
<div class="a" style="left:70.2px;top:386.7px;width:9.2px;height:9.4px;background:linear-gradient(#666,#585858);border-radius:2px"></div>
<div class="t" style="left:80px;top:387.55px;font-size:7.8px;color:#e2e2e2;">Colore in pianta</div>
<div class="a" style="left:136.5px;top:383.1px;width:59.1px;height:18.8px;background:#ff0000;border:1px solid #3a1010"></div>
<div class="t" style="left:68.9px;top:409.6px;font-size:7.8px;color:#e2e2e2;">Dimensione punti</div>
<div class="a" style="left:158.1px;top:409.4px;width:28.1px;height:7.5px;background:#272727"></div>
<div class="t" style="left:158.8px;top:409.8px;font-size:7.8px;color:#f0f0f0;">4.00</div>
<div class="a" style="left:188.1px;top:407.25px;width:7.9px;height:11.75px;background:#5a5a5a;border-radius:2px"></div>
<svg style="left:188.1px;top:407.25px" width="8" height="12" viewBox="0 0 8 12"><path d="M2 4.5l2-2 2 2M2 7.5l2 2 2-2" fill="none" stroke="#ddd" stroke-width="0.8"/></svg>
<div class="t" style="left:73.4px;top:426.2px;font-size:7.8px;color:#e2e2e2;">Visibilità</div>
<div class="a" style="left:69px;top:434.4px;width:127.5px;height:16.9px;background:#383838;border:1px solid #404040;border-radius:3px"></div>
<div class="a" style="left:78.9px;top:438.2px;width:9.2px;height:9.4px;background:#1f7ae8;border-radius:2px"></div>
<svg style="left:78.9px;top:438.2px" width="9.2" height="9.4" viewBox="0 0 9.2 9.4"><path d="M2 4.8l2 2.4 3.6-5" fill="none" stroke="#fff" stroke-width="1.3"/></svg>
<div class="t" style="left:90.6px;top:439.4px;font-size:7.8px;color:#e2e2e2;">Piano attuale</div>
<div class="a" style="left:141px;top:438.1px;width:9.2px;height:9.4px;background:linear-gradient(#666,#585858);border-radius:2px"></div>
<div class="t" style="left:152.75px;top:439.05px;font-size:7.8px;color:#e2e2e2;">3D</div>
<div class="a" style="left:68.9px;top:456px;width:127.6px;height:1.2px;background:#555"></div>
<div class="t" style="left:73.4px;top:463.5px;font-size:7.8px;color:#5e5e5e;">Genera</div>
<div class="a" style="left:69px;top:472.3px;width:127.5px;height:28.4px;background:#383838;border:1px solid #404040;border-radius:3px"></div>
<div class="a" style="left:85px;top:476px;width:19.6px;height:19.5px;background:#2b2b2b"></div>
<div class="a" style="left:122.3px;top:476px;width:19.6px;height:19.5px;background:#2b2b2b"></div>
<div class="a" style="left:159.4px;top:476px;width:19.6px;height:19.5px;background:#2b2b2b"></div>
<svg style="left:85px;top:476px" width="20" height="20" viewBox="0 0 20 20"><rect x="2.5" y="4.5" width="15" height="11" fill="#8a8a8a"/><path d="M3 14a2.4 2.4 0 0 1 0.5-4.8a3.4 3.4 0 0 1 6.5-1.6a2.4 2.4 0 0 1 3.8 1.6a2.4 2.4 0 0 1 3.2 4.8z" fill="#999" stroke="#666" stroke-width="0.5" stroke-dasharray="0.8 0.5"/></svg>
<svg style="left:122.3px;top:476px" width="20" height="20" viewBox="0 0 20 20"><path d="M3.5 12c0-4 3-7 6.5-7s6 2.5 6.5 6c0 3-1 5-2.5 5.5-1.5 0-2.5-2-4-2s-2.5 1.5-4 1c-1.5-0.5-2.5-1.5-2.5-3.5z" fill="#8a8a8a"/></svg>
<svg style="left:159.4px;top:476px" width="20" height="20" viewBox="0 0 20 20"><rect x="2.5" y="2.5" width="15" height="15" fill="none" stroke="#555" stroke-width="0.7"/><path d="M3 17.5V12l3.5-3.5 3.5 3.5 3-3.5 4.5 5v4z" fill="#8a8a8a"/><circle cx="9.8" cy="5.5" r="1" fill="#8a8a8a"/><path d="M3.5 17.5l6.5-8" stroke="#444" stroke-width="0.6"/></svg>
<div class="a" style="left:213px;top:69px;width:371px;height:477px;background:#efefef;border-top:1px solid #fafafa;border-left:1px solid #f8f8f8"></div>
<svg style="left:213px;top:69px" width="371" height="477" viewBox="213 69 371 477"><rect x="259.5" y="138.5" width="247.9" height="401.1" fill="none" stroke="#606060" stroke-width="0.8"/><path d="M271.5 69V546M213 508.3H584" stroke="#6cb46c" stroke-width="0.8"/><path d="M222.6 87.5V173.3M243 173.3V365.7" stroke="#444" stroke-width="0.8"/><path d="M222.6 173.3V175" stroke="#aaa" stroke-width="0.8"/><path d="M221.3 88.7L223.9 86.3" stroke="#222" stroke-width="1.1"/><path d="M221.3 112.2L223.9 109.8" stroke="#222" stroke-width="1.1"/><path d="M221.3 140.2L223.9 137.8" stroke="#222" stroke-width="1.1"/><path d="M221.3 174.5L223.9 172.10000000000002" stroke="#222" stroke-width="1.1"/><path d="M241.7 174.5L244.3 172.10000000000002" stroke="#222" stroke-width="1.1"/><path d="M241.7 366.9L244.3 364.5" stroke="#222" stroke-width="1.1"/><text transform="translate(219.5 99) rotate(-90)" text-anchor="middle" font-family="Liberation Sans" font-size="3.6" fill="#555">233.1</text><text transform="translate(219.5 125) rotate(-90)" text-anchor="middle" font-family="Liberation Sans" font-size="3.6" fill="#555">262.2</text><text transform="translate(219.5 156) rotate(-90)" text-anchor="middle" font-family="Liberation Sans" font-size="3.6" fill="#555">319.1</text><text transform="translate(240 270) rotate(-90)" text-anchor="middle" font-family="Liberation Sans" font-size="3.6" fill="#555">1611.0</text><path d="M213 366.5h3l1 1.5h2.5l0.8 0.7h6" fill="none" stroke="#e22" stroke-width="0.7"/><path d="M213 304v2" stroke="#e22" stroke-width="0.5"/><path d="M293.5 240V190.6H317" fill="none" stroke="#34402e" stroke-width="3.2"/><path d="M293.5 240V192" fill="none" stroke="#2d5020" stroke-width="3.2"/><path d="M316 190.6H323V186" fill="none" stroke="#8a887a" stroke-width="2.6"/><path d="M287 241.3H304.5L306 238" fill="none" stroke="#3a4032" stroke-width="1.5" stroke-linejoin="miter"/><path d="M323 187V181H405V164.1H478.7V236" fill="none" stroke="#363a33" stroke-width="1.9"/><path d="M329.2 238V186.8H405.5V236.3H417.5V239.5H421V236.3H435.8A6.3 6.3 0 0 1 448.4 236.3H460" fill="none" stroke="#4a4e44" stroke-width="1.4"/><path d="M304.5 241.3V250M311.8 243V249M307 246.5h5" fill="none" stroke="#555" stroke-width="1.2"/><path d="M319 238.5V242H322M321 245L336 238.5" fill="none" stroke="#555" stroke-width="1.1"/><path d="M415.8 195V173.6H468.4V226H415.8V210" fill="none" stroke="#3a4032" stroke-width="1.6"/><rect x="416" y="186.3" width="29" height="2.8" fill="#333a30"/><path d="M416 195.5h5v2.5M416 208h4M420 198v10" fill="none" stroke="#444" stroke-width="1"/><rect x="460" y="190.5" width="1.6" height="1.6" fill="#444"/><rect x="463.5" y="190.5" width="1.6" height="1.6" fill="#444"/><path d="M478.7 180a2 2 0 0 1 0 5M478.7 212a2 2 0 0 1 0 5" fill="none" stroke="#3a4032" stroke-width="1.5"/><path d="M437.5 233.5a2.5 2 0 0 0 5 0" fill="none" stroke="#333" stroke-width="1.5"/><path d="M349 180V178.5h3M346 180.5a2 2 0 0 1 4 0" fill="none" stroke="#444" stroke-width="1"/><path d="M366 186.3a2 2 0 0 0 4 0M377 186.3a2 2 0 0 0 4 0" fill="none" stroke="#3a4032" stroke-width="1.4"/><rect x="293" y="232" width="2" height="2" fill="#444"/><circle cx="283" cy="213" r="0.7" fill="#444"/><path d="M460 236.3V451M467.6 236.3V451" fill="none" stroke="#7a8458" stroke-width="1.1"/><path d="M467.6 236.3H478.7" fill="none" stroke="#3a4032" stroke-width="1.5" stroke-linejoin="miter"/><path d="M468 387V425" fill="none" stroke="#6a7a40" stroke-width="2"/><path d="M312 249V259.6M315 270V274.8M315 298.2V308.8M315 313.5V322.8M315 345V355.6M315 361.5V370.8" fill="none" stroke="#3a4032" stroke-width="1.4"/><rect x="311.5" y="259.6" width="7" height="6.899999999999977" fill="none" stroke="#3a4032" stroke-width="1.2"/><rect x="311.5" y="274.8" width="7" height="23.399999999999977" fill="none" stroke="#3a4032" stroke-width="1.2"/><rect x="311.5" y="308.8" width="7" height="4.699999999999989" fill="none" stroke="#3a4032" stroke-width="1.2"/><rect x="311.5" y="322.8" width="7" height="22.19999999999999" fill="none" stroke="#3a4032" stroke-width="1.2"/><rect x="311.5" y="355.6" width="7" height="5.899999999999977" fill="none" stroke="#3a4032" stroke-width="1.2"/><path d="M311.3 370.8V451.3H468.5M318.8 371V451.3" fill="none" stroke="#3a4032" stroke-width="1.5"/><path d="M319 385.5H460" stroke="#55554a" stroke-width="2.4"/><path d="M320 391.3H459" stroke="#777" stroke-width="1" stroke-dasharray="1.2 2"/><path d="M322 403H418" stroke="#999" stroke-width="0.8" stroke-dasharray="1 3"/><rect x="417.5" y="380" width="4.5" height="7" fill="none" stroke="#666" stroke-width="1"/><path d="M319.5 413.5H352.5V415H363V420H353.5V430.5H319.5z" fill="#635a55"/><path d="M420.5 413.5H385V415H375V420H384.5V430.5H420.5z" fill="#635a55"/><path d="M425.6 418.8H460M425.6 418.8V443.2H460" fill="none" stroke="#555" stroke-width="1.1"/><path d="M348.8 451.3V469.6L371 490.5H411.8L432 469.6V451.3M354 451.3V467.5L373 485.5H410L427 467.5V451.3" fill="none" stroke="#4e5246" stroke-width="1.15"/><path d="M333 471.5h4M444 470h2" stroke="#444" stroke-width="1.2"/><rect x="416" y="282" width="3.5" height="3.5" fill="none" stroke="#7a7a50" stroke-width="0.8"/><rect x="419" y="331" width="3.2" height="3.2" fill="none" stroke="#555" stroke-width="0.9"/><g fill="#555"><rect x="434.1" y="401.8" width="1.2" height="1.5"/><rect x="360.0" y="402.9" width="0.9" height="1.3"/><rect x="395.6" y="398.5" width="0.8" height="1.2"/><rect x="359.7" y="448.9" width="1.0" height="1.3"/><rect x="399.1" y="443.2" width="1.2" height="1.1"/><rect x="343.2" y="401.4" width="1.3" height="0.7"/><rect x="340.8" y="404.7" width="0.8" height="1.0"/><rect x="401.3" y="409.5" width="1.0" height="0.9"/><rect x="374.1" y="416.9" width="1.2" height="0.7"/><rect x="329.3" y="406.5" width="0.9" height="0.6"/><rect x="320.0" y="403.3" width="0.9" height="0.6"/><rect x="440.7" y="428.8" width="0.8" height="0.9"/><rect x="331.9" y="400.6" width="0.8" height="1.3"/><rect x="427.5" y="413.1" width="1.3" height="1.5"/><rect x="369.1" y="396.6" width="0.9" height="0.8"/><rect x="370.3" y="407.1" width="0.8" height="0.8"/><rect x="420.0" y="404.4" width="0.7" height="1.4"/><rect x="455.3" y="431.1" width="1.1" height="0.7"/><rect x="440.3" y="440.4" width="0.8" height="0.9"/><rect x="338.1" y="445.1" width="1.0" height="1.1"/><rect x="420.1" y="425.6" width="1.1" height="1.1"/><rect x="450.2" y="441.2" width="0.7" height="1.0"/><rect x="330.0" y="408.2" width="1.2" height="1.3"/><rect x="380.8" y="396.0" width="1.2" height="1.1"/><rect x="454.1" y="400.8" width="0.6" height="1.3"/><rect x="445.8" y="440.0" width="0.7" height="1.4"/><rect x="398.7" y="433.5" width="0.7" height="1.2"/><rect x="407.6" y="439.1" width="1.4" height="0.7"/><rect x="439.1" y="420.0" width="1.1" height="1.4"/><rect x="352.9" y="401.0" width="0.6" height="0.8"/><rect x="322.5" y="408.8" width="1.3" height="1.1"/><rect x="414.9" y="449.0" width="1.3" height="1.2"/><rect x="368.0" y="398.0" width="0.7" height="1.3"/><rect x="355.3" y="404.0" width="1.4" height="1.4"/><rect x="412.5" y="410.5" width="0.9" height="1.0"/><rect x="320.7" y="409.5" width="1.0" height="0.6"/><rect x="323.1" y="411.7" width="1.1" height="1.1"/><rect x="441.3" y="416.4" width="1.5" height="0.7"/><rect x="414.2" y="433.1" width="0.6" height="0.7"/><rect x="354.8" y="399.1" width="1.3" height="0.8"/><rect x="330.7" y="403.1" width="1.3" height="0.9"/><rect x="398.4" y="395.7" width="0.8" height="1.2"/><rect x="415.5" y="432.2" width="1.1" height="1.0"/><rect x="382.2" y="411.6" width="0.9" height="0.9"/><rect x="418.4" y="444.6" width="0.9" height="1.0"/><rect x="457.8" y="427.4" width="1.0" height="0.8"/><rect x="359.4" y="446.5" width="0.8" height="1.1"/><rect x="395.8" y="434.6" width="1.3" height="1.0"/><rect x="423.9" y="430.4" width="0.6" height="1.4"/><rect x="374.4" y="404.2" width="0.8" height="1.4"/><rect x="457.5" y="419.7" width="0.8" height="0.7"/><rect x="367.2" y="400.0" width="0.8" height="1.1"/><rect x="372.0" y="413.6" width="0.8" height="1.5"/><rect x="406.9" y="442.5" width="0.8" height="0.8"/><rect x="454.2" y="408.7" width="0.7" height="1.1"/><rect x="343.3" y="430.2" width="1.2" height="1.2"/><rect x="384.6" y="416.7" width="1.2" height="1.2"/><rect x="332.8" y="415.5" width="1.2" height="1.2"/><rect x="383.6" y="425.4" width="1.2" height="1.2"/><rect x="331.2" y="411.5" width="1.2" height="1.2"/><rect x="372.4" y="422.8" width="1.2" height="1.2"/><rect x="358.8" y="414.9" width="1.2" height="1.2"/><rect x="380.1" y="410.2" width="1.2" height="1.2"/><rect x="350.2" y="420.1" width="1.2" height="1.2"/><rect x="415.9" y="424.2" width="1.2" height="1.2"/><rect x="408.4" y="420.5" width="1.2" height="1.2"/><rect x="343.5" y="415.4" width="1.2" height="1.2"/><rect x="416.1" y="425.5" width="1.2" height="1.2"/><rect x="350.7" y="410.5" width="1.2" height="1.2"/><rect x="369.8" y="424.8" width="1.2" height="1.2"/><rect x="362.0" y="415.7" width="1.2" height="1.2"/><rect x="386.7" y="430.4" width="1.2" height="1.2"/><rect x="342.7" y="410.8" width="1.2" height="1.2"/><rect x="353.8" y="419.3" width="1.2" height="1.2"/><rect x="388.3" y="414.4" width="1.2" height="1.2"/><rect x="399.7" y="426.3" width="1.2" height="1.2"/><rect x="370.5" y="414.5" width="1.2" height="1.2"/><rect x="417.0" y="416.9" width="1.2" height="1.2"/><rect x="402.0" y="415.1" width="1.2" height="1.2"/><rect x="342.1" y="426.7" width="1.2" height="1.2"/><rect x="349.5" y="430.9" width="1.2" height="1.2"/><rect x="369.6" y="414.1" width="1.2" height="1.2"/><rect x="342.3" y="419.2" width="1.2" height="1.2"/><rect x="386.5" y="430.9" width="1.2" height="1.2"/><rect x="334.6" y="418.7" width="1.2" height="1.2"/><rect x="341.3" y="431.4" width="1.2" height="1.2"/><rect x="334.2" y="411.1" width="1.2" height="1.2"/><rect x="326.0" y="418.7" width="1.2" height="1.2"/><rect x="409.8" y="429.4" width="1.2" height="1.2"/><rect x="393.3" y="431.9" width="1.2" height="1.2"/><rect x="413.2" y="417.2" width="1.2" height="1.2"/><rect x="338.6" y="430.6" width="1.2" height="1.2"/><rect x="394.6" y="410.7" width="1.2" height="1.2"/><rect x="386.4" y="418.3" width="1.2" height="1.2"/><rect x="357.4" y="417.3" width="1.2" height="1.2"/><rect x="336.9" y="410.1" width="1.2" height="1.2"/><rect x="348.0" y="417.7" width="1.2" height="1.2"/><rect x="415.6" y="412.7" width="1.2" height="1.2"/><rect x="416.4" y="414.6" width="1.2" height="1.2"/><rect x="355.7" y="428.1" width="1.2" height="1.2"/><rect x="402.2" y="419.5" width="1.2" height="1.2"/><rect x="324.9" y="420.4" width="1.2" height="1.2"/><rect x="357.3" y="430.2" width="1.2" height="1.2"/><rect x="339.3" y="418.0" width="1.2" height="1.2"/><rect x="409.7" y="410.7" width="1.2" height="1.2"/><rect x="361.1" y="427.9" width="1.2" height="1.2"/><rect x="396.7" y="410.9" width="1.2" height="1.2"/><rect x="323.5" y="411.4" width="1.2" height="1.2"/><rect x="412.0" y="415.7" width="1.2" height="1.2"/><rect x="394.7" y="429.8" width="1.2" height="1.2"/><rect x="353.9" y="416.0" width="1.2" height="1.2"/><rect x="415.8" y="423.6" width="1.2" height="1.2"/><rect x="346.2" y="425.8" width="1.2" height="1.2"/><rect x="351.6" y="416.1" width="1.2" height="1.2"/><rect x="320.4" y="426.6" width="1.2" height="1.2"/><rect x="411.6" y="423.9" width="1.2" height="1.2"/><rect x="414.3" y="410.5" width="1.2" height="1.2"/><rect x="343.4" y="420.5" width="1.2" height="1.2"/><rect x="415.7" y="431.0" width="1.2" height="1.2"/><rect x="358.7" y="415.5" width="1.2" height="1.2"/><rect x="363.0" y="420.9" width="1.2" height="1.2"/><rect x="412.8" y="414.0" width="1.2" height="1.2"/><rect x="400.3" y="426.2" width="1.2" height="1.2"/><rect x="402.3" y="427.0" width="1.2" height="1.2"/><rect x="380.7" y="417.2" width="1.2" height="1.2"/><rect x="352.0" y="418.0" width="1.2" height="1.2"/><rect x="398.2" y="411.7" width="1.2" height="1.2"/><rect x="339.7" y="426.6" width="1.2" height="1.2"/><rect x="344.7" y="411.4" width="1.2" height="1.2"/><rect x="323.4" y="422.2" width="1.2" height="1.2"/><rect x="352.6" y="431.6" width="1.2" height="1.2"/><rect x="408.3" y="431.7" width="1.2" height="1.2"/><rect x="346.5" y="411.8" width="1.2" height="1.2"/><rect x="329.6" y="421.0" width="1.2" height="1.2"/><rect x="391.0" y="419.8" width="1.2" height="1.2"/></g><g fill="#c8c4b8" opacity="0.8"><rect x="337.5" y="424.2" width="1.0" height="1.1"/><rect x="404.9" y="415.2" width="1.2" height="0.7"/><rect x="391.8" y="426.3" width="0.7" height="0.7"/><rect x="326.4" y="428.9" width="1.0" height="0.8"/><rect x="361.7" y="422.1" width="0.7" height="1.1"/><rect x="419.6" y="414.8" width="0.9" height="1.2"/><rect x="416.1" y="413.7" width="0.7" height="0.6"/><rect x="360.9" y="423.5" width="1.2" height="0.8"/><rect x="395.2" y="417.7" width="1.1" height="1.3"/><rect x="345.0" y="424.2" width="0.7" height="0.8"/><rect x="328.6" y="417.6" width="1.0" height="1.0"/><rect x="320.5" y="418.9" width="1.0" height="0.6"/><rect x="328.5" y="427.3" width="0.9" height="0.6"/><rect x="336.6" y="422.9" width="1.0" height="0.6"/><rect x="349.2" y="420.4" width="0.7" height="0.7"/><rect x="389.1" y="423.2" width="0.8" height="0.8"/><rect x="419.8" y="419.5" width="0.7" height="1.1"/><rect x="320.2" y="429.2" width="0.8" height="1.2"/><rect x="357.1" y="421.3" width="0.6" height="0.5"/><rect x="403.8" y="429.4" width="0.6" height="1.0"/><rect x="341.2" y="415.6" width="0.7" height="0.9"/><rect x="379.9" y="421.8" width="1.1" height="1.3"/><rect x="325.3" y="430.0" width="1.3" height="0.9"/><rect x="358.9" y="420.0" width="1.2" height="1.0"/><rect x="382.2" y="427.1" width="0.7" height="0.8"/><rect x="412.3" y="416.3" width="0.7" height="0.8"/><rect x="392.3" y="415.2" width="0.7" height="1.1"/><rect x="376.8" y="423.1" width="1.1" height="0.5"/><rect x="380.3" y="423.8" width="0.9" height="1.0"/><rect x="337.6" y="423.5" width="0.8" height="1.0"/><rect x="338.4" y="413.4" width="1.0" height="0.9"/><rect x="352.1" y="427.0" width="0.9" height="0.6"/><rect x="324.5" y="415.3" width="0.8" height="0.6"/><rect x="341.4" y="413.7" width="1.0" height="0.6"/><rect x="410.0" y="422.2" width="0.5" height="0.9"/><rect x="359.9" y="415.5" width="1.2" height="1.3"/><rect x="411.7" y="416.5" width="1.3" height="0.9"/><rect x="416.2" y="416.0" width="1.1" height="1.2"/><rect x="334.7" y="426.6" width="0.6" height="1.2"/><rect x="354.3" y="415.6" width="0.9" height="1.2"/><rect x="331.0" y="422.1" width="0.8" height="0.5"/><rect x="326.8" y="429.9" width="1.0" height="1.2"/><rect x="353.0" y="415.1" width="0.9" height="1.0"/><rect x="356.7" y="423.0" width="1.0" height="1.2"/><rect x="361.7" y="424.3" width="0.8" height="1.1"/><rect x="361.6" y="423.4" width="0.8" height="1.1"/><rect x="327.4" y="426.4" width="0.5" height="1.2"/><rect x="346.8" y="430.7" width="1.0" height="1.0"/><rect x="320.1" y="413.6" width="0.6" height="1.0"/><rect x="341.5" y="429.1" width="0.6" height="0.7"/><rect x="376.0" y="413.0" width="0.8" height="0.6"/><rect x="329.4" y="423.5" width="1.0" height="0.7"/><rect x="396.4" y="415.4" width="1.2" height="0.7"/><rect x="324.0" y="424.5" width="1.2" height="1.1"/><rect x="331.1" y="413.2" width="1.0" height="0.9"/><rect x="347.1" y="421.0" width="1.2" height="1.1"/><rect x="357.9" y="413.8" width="0.9" height="0.8"/><rect x="322.5" y="427.0" width="0.5" height="0.9"/><rect x="381.4" y="416.6" width="1.0" height="0.9"/><rect x="411.6" y="416.1" width="0.7" height="0.7"/><rect x="357.4" y="427.1" width="1.1" height="0.5"/><rect x="408.5" y="421.4" width="1.1" height="0.9"/><rect x="324.4" y="417.2" width="0.5" height="0.8"/><rect x="406.3" y="428.2" width="1.1" height="0.7"/><rect x="394.6" y="427.2" width="0.9" height="0.7"/><rect x="418.4" y="416.9" width="1.2" height="0.5"/><rect x="329.9" y="426.4" width="1.3" height="1.1"/><rect x="357.0" y="418.9" width="0.7" height="1.2"/><rect x="406.2" y="425.0" width="1.3" height="0.9"/><rect x="406.4" y="428.4" width="0.8" height="1.1"/><rect x="388.8" y="416.8" width="1.0" height="0.6"/><rect x="381.5" y="413.5" width="0.6" height="1.2"/><rect x="326.0" y="413.5" width="0.5" height="1.1"/><rect x="406.4" y="426.3" width="0.6" height="1.0"/><rect x="354.3" y="427.8" width="1.2" height="0.6"/><rect x="416.1" y="430.0" width="0.6" height="0.7"/><rect x="321.4" y="428.3" width="1.1" height="1.0"/><rect x="403.4" y="418.2" width="0.6" height="0.6"/><rect x="384.2" y="418.7" width="0.8" height="0.5"/><rect x="331.9" y="425.9" width="0.8" height="0.8"/><rect x="397.7" y="428.3" width="1.0" height="0.5"/><rect x="338.3" y="426.9" width="0.8" height="1.1"/><rect x="384.7" y="428.5" width="0.6" height="1.2"/><rect x="320.1" y="416.6" width="1.1" height="1.3"/><rect x="340.6" y="421.8" width="1.1" height="0.6"/><rect x="334.6" y="428.0" width="0.7" height="1.3"/><rect x="329.0" y="425.6" width="0.9" height="0.6"/><rect x="378.6" y="427.2" width="1.1" height="1.1"/><rect x="391.0" y="420.2" width="0.8" height="1.2"/><rect x="357.3" y="413.5" width="0.7" height="0.7"/><rect x="397.6" y="419.8" width="1.2" height="0.7"/><rect x="342.3" y="426.6" width="1.1" height="1.0"/><rect x="333.7" y="415.8" width="1.2" height="1.0"/><rect x="382.6" y="420.9" width="1.1" height="1.0"/><rect x="339.4" y="428.9" width="0.7" height="0.7"/><rect x="349.5" y="428.2" width="0.6" height="0.6"/><rect x="333.7" y="422.4" width="0.6" height="0.8"/><rect x="361.0" y="426.1" width="0.6" height="1.3"/><rect x="336.1" y="430.7" width="1.1" height="1.1"/><rect x="328.2" y="424.5" width="0.6" height="0.7"/><rect x="321.4" y="420.2" width="1.1" height="1.1"/><rect x="403.5" y="421.3" width="0.6" height="1.0"/><rect x="351.1" y="429.3" width="0.8" height="1.0"/><rect x="394.0" y="417.1" width="1.1" height="1.2"/><rect x="406.5" y="428.3" width="1.0" height="1.0"/><rect x="333.1" y="424.3" width="0.6" height="0.8"/><rect x="407.1" y="424.3" width="0.7" height="0.8"/><rect x="346.1" y="420.4" width="1.0" height="1.2"/><rect x="347.5" y="427.0" width="0.8" height="0.9"/><rect x="376.7" y="422.8" width="0.6" height="1.1"/><rect x="398.4" y="414.8" width="1.0" height="0.9"/><rect x="398.0" y="424.5" width="1.2" height="0.9"/><rect x="359.8" y="416.8" width="1.0" height="0.8"/><rect x="380.5" y="430.7" width="0.8" height="0.5"/><rect x="336.8" y="413.2" width="0.8" height="0.8"/><rect x="390.8" y="417.8" width="0.7" height="1.1"/><rect x="398.7" y="416.9" width="1.1" height="0.8"/><rect x="325.4" y="427.0" width="1.1" height="1.0"/><rect x="343.6" y="417.1" width="1.3" height="0.8"/><rect x="411.8" y="427.7" width="0.9" height="0.7"/><rect x="380.6" y="428.0" width="0.8" height="1.2"/><rect x="335.8" y="417.6" width="0.8" height="0.6"/><rect x="350.3" y="418.1" width="0.7" height="0.7"/><rect x="338.0" y="424.5" width="1.0" height="0.8"/><rect x="413.5" y="414.0" width="1.2" height="1.2"/><rect x="381.3" y="428.0" width="1.0" height="0.5"/><rect x="360.0" y="424.8" width="0.7" height="0.6"/><rect x="329.8" y="427.0" width="0.8" height="0.6"/><rect x="410.6" y="416.0" width="1.2" height="1.0"/><rect x="405.1" y="429.1" width="1.1" height="1.2"/><rect x="349.1" y="422.6" width="1.1" height="0.9"/><rect x="400.0" y="417.8" width="0.7" height="0.6"/><rect x="322.5" y="421.4" width="0.6" height="0.9"/><rect x="342.7" y="428.5" width="0.5" height="1.2"/><rect x="343.6" y="425.0" width="1.2" height="0.8"/><rect x="360.3" y="414.4" width="1.0" height="1.0"/><rect x="345.6" y="425.3" width="1.2" height="0.8"/><rect x="398.0" y="421.7" width="1.2" height="0.5"/><rect x="403.1" y="419.1" width="1.2" height="0.8"/><rect x="342.1" y="426.9" width="0.7" height="0.8"/><rect x="343.3" y="427.9" width="0.7" height="1.2"/><rect x="341.2" y="417.9" width="0.9" height="1.3"/><rect x="410.6" y="419.0" width="0.8" height="0.7"/><rect x="403.6" y="427.1" width="0.5" height="1.1"/><rect x="399.5" y="413.9" width="0.7" height="0.5"/><rect x="358.7" y="424.0" width="1.0" height="1.1"/><rect x="402.5" y="424.1" width="1.0" height="1.1"/><rect x="405.6" y="416.8" width="1.0" height="0.9"/><rect x="379.6" y="416.3" width="0.5" height="1.1"/><rect x="404.5" y="419.6" width="1.2" height="1.1"/><rect x="386.6" y="418.4" width="0.8" height="0.8"/><rect x="347.0" y="429.8" width="0.5" height="1.0"/><rect x="325.0" y="427.6" width="1.0" height="1.2"/><rect x="320.6" y="420.0" width="1.0" height="1.3"/><rect x="396.4" y="420.4" width="0.6" height="1.0"/><rect x="326.4" y="413.3" width="0.5" height="1.0"/><rect x="360.6" y="414.6" width="1.2" height="0.6"/><rect x="350.2" y="417.4" width="1.1" height="0.6"/><rect x="352.5" y="425.8" width="1.2" height="1.1"/><rect x="346.4" y="425.8" width="0.9" height="1.2"/></g><path d="M422 133.5L423 137.2L426.5 138.5L423 139.8L422 143.5L421 139.8L417.5 138.5L421 137.2z" fill="#a8b4f0"/><circle cx="395.5" cy="212.8" r="7.3" fill="none" stroke="#f0a8a8" stroke-width="0.7"/><circle cx="395.5" cy="212.8" r="3.8" fill="#ffe800" stroke="#e01818" stroke-width="1.5"/><path d="M301.5 277.3L572 546" stroke="#ee1018" stroke-width="1.5" stroke-dasharray="3.6 1.6"/><circle cx="299.2" cy="274.8" r="4.2" fill="none" stroke="#e8141a" stroke-width="1.6"/><circle cx="299.2" cy="274.8" r="0.6" fill="#e8141a"/></svg>
<div class="a" style="left:212px;top:67.6px;width:372px;height:1.2px;background:#262626"></div>
<div class="a" style="left:211.8px;top:68px;width:1.2px;height:478px;background:#262626"></div>
<div class="a" style="left:584px;top:62px;width:11px;height:494px;background:#2a2a2a"></div>
<div class="a" style="left:213px;top:546px;width:382px;height:10px;background:#2a2a2a"></div>
<div class="a" style="left:586.8px;top:250px;width:5.2px;height:134px;background:#959595;border-radius:2.6px"></div>
<div class="a" style="left:360.4px;top:548.8px;width:56px;height:4.4px;background:#9a9a9a;border-radius:2px"></div>
<svg style="left:584px;top:546px" width="12" height="11" viewBox="0 0 12 11"><path d="M2.5 10V2.5H10" fill="none" stroke="#777" stroke-width="0.9"/></svg>
<div class="a" style="left:600px;top:62px;width:420px;height:560px;background:#303030"></div>
<div class="a" style="left:601.2px;top:61px;width:1.8px;height:529px;background:#4a4a4a"></div>
<div class="a" style="left:603px;top:61px;width:417px;height:15px;background:linear-gradient(#3d3d3d,#6b6b6b);border-bottom:1px solid #aaa"></div>
<div class="a" style="left:603px;top:109px;width:417px;height:481px;background:#0364b0"></div>
<svg style="left:603px;top:109px" width="417" height="481" viewBox="603 109 417 481"><defs>
<filter id="spw" x="0" y="0" width="100%" height="100%"><feTurbulence type="fractalNoise" baseFrequency="1.3" numOctaves="1" seed="5"/><feColorMatrix type="matrix" values="0 0 0 0 1  0 0 0 0 1  0 0 0 0 1  0 0 2.4 0 -1.15"/></filter>
<filter id="spk" x="0" y="0" width="100%" height="100%"><feTurbulence type="fractalNoise" baseFrequency="1.3" numOctaves="1" seed="9"/><feColorMatrix type="matrix" values="0 0 0 0 0  0 0 0 0 0  0 0 0 0 0  0 0 2.4 0 -1.05"/></filter>
<clipPath id="cg"><polygon points="646,437 662,395 676,351 692,326 758,298 948,306 994,308.7 1016.4,315.6 929,382 848,453 795,476 729,470 690,453"/></clipPath>
<clipPath id="cb"><polygon points="681,342 692,325 758,298 824,268 822,261 830,257 852,249 874,252 927,268 935.6,267.5 994,285.5 992.3,308.7 978.6,320.8 958,332.8 949.3,340 859,397 810,439 770,415 744.4,423.8 709.4,421.6 689.7,402"/></clipPath>
<clipPath id="cfl"><polygon points="775,316 845,285 880,300 913,317 910,331.6 857.5,367.5"/></clipPath>
</defs><polygon points="646,437 662,395 676,351 692,326 758,298 948,306 994,308.7 1016.4,315.6 929,382 848,453 795,476 729,470 690,453" fill="#4089c0" /><polygon points="700,450 729,470 795,476 848,453 929,382 1016.4,315.6 994,308.7 949.3,340 859,397 810,439 770,430" fill="#3a84bc" /><polygon points="809,440 860,404 949,342 994,310 1016.4,315.6 929,382 848,453 830,452" fill="#2668a0" /><polygon points="830,445 900,395 990,322 1005,318 930,378 850,447" fill="#2f7a8a" opacity="0.6"/><ellipse cx="681" cy="430" rx="13" ry="8.5" fill="#78b0dc" opacity="0.8"/><path d="M659 421L679 372M662 445L700 460" stroke="#7a8a90" stroke-width="1" opacity="0.6"/><g clip-path="url(#cg)"><rect x="640" y="290" width="380" height="190" filter="url(#spw)" opacity="0.3"/><rect x="640" y="290" width="380" height="190" filter="url(#spk)" opacity="0.2"/></g><polygon points="951,303.6 970,295 994,285.5 992.3,308.7 978.6,320.8 958,332.8 949.3,336.2" fill="#bcb8b0" /><polygon points="930.4,274.4 935.6,267.5 994,285.5 978.6,288 966.5,296.7 952.8,302.7 918.4,286.4" fill="#8e8474" /><polygon points="913,290 951,303.6 949.3,336.2 913,317.3" fill="#d2d0d2" /><rect x="925" y="300" width="7" height="10" fill="#8a7a50" opacity="0.8"/><path d="M970 305V325M983 300V318" stroke="#7d8898" stroke-width="3" opacity="0.6"/><polygon points="691,325.5 751.3,304.4 821.1,259.7 852,248.4 928,270.2 949.3,311.3 855.8,370.2 809,400.7" fill="#6f7f92" /><polygon points="778.5,315.4 821,296 839.5,291 847.8,286.4 926.6,287.8 949.3,311.3 855.8,370.2" fill="#6a7d96" /><polygon points="790,318 818,305 846,306 824,322" fill="#8a96a6" opacity="0.8"/><polygon points="850,316 880,312 905,326 875,340" fill="#7f90a4" opacity="0.7"/><polygon points="829.5,256.9 852,248.4 871.7,253.4 928,270.2 926.6,287.8 949.3,311.3 907,324.4 901,290.6 847.8,286.4 832.3,293.4 822,280" fill="#d5d3c2" /><polygon points="829.5,256.9 852,248.4 871.7,253.4 852,262.5 853.4,286.4 832,292 822,270" fill="#a8a69c" /><polygon points="836,262 852,255 866,258 852,266" fill="#c8c6c0" /><polygon points="871.7,253.4 928,270.2 926.6,287.8 900,280 872,270 853.4,264" fill="#e2e0d6" /><path d="M884 266l2 8M892 268l3 7M898 272l2 6" stroke="#6a9a48" stroke-width="2.4"/><path d="M860 272l3 6" stroke="#7a3040" stroke-width="2"/><rect x="871.7" y="283.6" width="16" height="7" fill="#f4f4f4" transform="rotate(20 880 287)"/><path d="M868 292l2 6M873 294l2 6M878 295l2 6M883 294l1.5 5" stroke="#c42a18" stroke-width="2.4"/><path d="M885.7 305V330" stroke="#6a6050" stroke-width="3.6"/><path d="M893 295v10" stroke="#7a6a50" stroke-width="2.2"/><polygon points="914,286.4 940,296.3 949.3,311.3 949.3,335 914,318" fill="#d4d0d8" /><rect x="927" y="299" width="7" height="11" fill="#8a7a48" opacity="0.85"/><path d="M812.7 326L863.3 309" stroke="#7c3a4c" stroke-width="5.2" opacity="0.85"/><g clip-path="url(#cfl2)"><path d="M780.8 322.6l16.5 9" stroke="#3e4a5a" stroke-width="1.2" opacity="0.6"/><path d="M780.0 321.0l16.5 9" stroke="#b39c6c" stroke-width="2.6"/><path d="M786.7 319.7l16.5 9" stroke="#3e4a5a" stroke-width="1.2" opacity="0.6"/><path d="M785.9 318.1l16.5 9" stroke="#b39c6c" stroke-width="2.6"/><path d="M792.6 316.7l16.5 9" stroke="#3e4a5a" stroke-width="1.2" opacity="0.6"/><path d="M791.8 315.1l16.5 9" stroke="#b39c6c" stroke-width="2.6"/><path d="M798.5 313.8l16.5 9" stroke="#3e4a5a" stroke-width="1.2" opacity="0.6"/><path d="M797.7 312.1l16.5 9" stroke="#b39c6c" stroke-width="2.6"/><path d="M804.4 310.8l16.5 9" stroke="#3e4a5a" stroke-width="1.2" opacity="0.6"/><path d="M803.6 309.2l16.5 9" stroke="#b39c6c" stroke-width="2.6"/><path d="M810.3 307.9l16.5 9" stroke="#3e4a5a" stroke-width="1.2" opacity="0.6"/><path d="M809.5 306.2l16.5 9" stroke="#b39c6c" stroke-width="2.6"/><path d="M816.2 304.9l16.5 9" stroke="#3e4a5a" stroke-width="1.2" opacity="0.6"/><path d="M815.4 303.3l16.5 9" stroke="#b39c6c" stroke-width="2.6"/><path d="M812.8 338.6l19 10.8" stroke="#3e4a5a" stroke-width="1.2" opacity="0.6"/><path d="M812.0 337.0l19 10.8" stroke="#b39c6c" stroke-width="2.6"/><path d="M818.1 335.7l19 10.8" stroke="#3e4a5a" stroke-width="1.2" opacity="0.6"/><path d="M817.3 334.1l19 10.8" stroke="#b39c6c" stroke-width="2.6"/><path d="M823.4 332.8l19 10.8" stroke="#3e4a5a" stroke-width="1.2" opacity="0.6"/><path d="M822.6 331.2l19 10.8" stroke="#b39c6c" stroke-width="2.6"/><path d="M828.7 329.9l19 10.8" stroke="#3e4a5a" stroke-width="1.2" opacity="0.6"/><path d="M827.9 328.3l19 10.8" stroke="#b39c6c" stroke-width="2.6"/><path d="M834.0 327.0l19 10.8" stroke="#3e4a5a" stroke-width="1.2" opacity="0.6"/><path d="M833.2 325.4l19 10.8" stroke="#b39c6c" stroke-width="2.6"/><path d="M839.3 324.1l19 10.8" stroke="#3e4a5a" stroke-width="1.2" opacity="0.6"/><path d="M838.5 322.5l19 10.8" stroke="#b39c6c" stroke-width="2.6"/><path d="M844.6 321.2l19 10.8" stroke="#3e4a5a" stroke-width="1.2" opacity="0.6"/><path d="M843.8 319.6l19 10.8" stroke="#b39c6c" stroke-width="2.6"/><path d="M849.9 318.3l19 10.8" stroke="#3e4a5a" stroke-width="1.2" opacity="0.6"/><path d="M849.1 316.7l19 10.8" stroke="#b39c6c" stroke-width="2.6"/><path d="M855.2 315.4l19 10.8" stroke="#3e4a5a" stroke-width="1.2" opacity="0.6"/><path d="M854.4 313.8l19 10.8" stroke="#b39c6c" stroke-width="2.6"/><path d="M848.8 356.6l12 6.8" stroke="#3e4a5a" stroke-width="1.2" opacity="0.6"/><path d="M848.0 355.0l12 6.8" stroke="#b39c6c" stroke-width="2.6"/><path d="M854.4 353.2l12 6.8" stroke="#3e4a5a" stroke-width="1.2" opacity="0.6"/><path d="M853.6 351.6l12 6.8" stroke="#b39c6c" stroke-width="2.6"/><path d="M860.0 349.8l12 6.8" stroke="#3e4a5a" stroke-width="1.2" opacity="0.6"/><path d="M859.2 348.2l12 6.8" stroke="#b39c6c" stroke-width="2.6"/><path d="M865.6 346.4l12 6.8" stroke="#3e4a5a" stroke-width="1.2" opacity="0.6"/><path d="M864.8 344.8l12 6.8" stroke="#b39c6c" stroke-width="2.6"/><path d="M871.2 343.0l12 6.8" stroke="#3e4a5a" stroke-width="1.2" opacity="0.6"/><path d="M870.4 341.4l12 6.8" stroke="#b39c6c" stroke-width="2.6"/><path d="M876.8 339.6l12 6.8" stroke="#3e4a5a" stroke-width="1.2" opacity="0.6"/><path d="M876.0 338.0l12 6.8" stroke="#b39c6c" stroke-width="2.6"/><path d="M882.4 336.2l12 6.8" stroke="#3e4a5a" stroke-width="1.2" opacity="0.6"/><path d="M881.6 334.6l12 6.8" stroke="#b39c6c" stroke-width="2.6"/><path d="M888.0 332.8l12 6.8" stroke="#3e4a5a" stroke-width="1.2" opacity="0.6"/><path d="M887.2 331.2l12 6.8" stroke="#b39c6c" stroke-width="2.6"/></g><defs><clipPath id="cfl2"><polygon points="778.5,315.4 839.5,291 850,300 907,324.4 949.3,311.3 855.8,370.2"/></clipPath></defs><polygon points="750,305.2 821.1,259.7 829.5,256.9 832,270 832.3,293.4 778.5,315.4" fill="#c4be98" /><rect x="758.0" y="297.0" width="3" height="10" fill="#ecece4" opacity="0.8"/><rect x="766.6" y="291.8" width="3" height="10" fill="#ecece4" opacity="0.8"/><rect x="775.2" y="286.6" width="3" height="10" fill="#ecece4" opacity="0.8"/><rect x="783.8" y="281.4" width="3" height="10" fill="#ecece4" opacity="0.8"/><rect x="792.4" y="276.2" width="3" height="10" fill="#ecece4" opacity="0.8"/><rect x="801.0" y="271.0" width="3" height="10" fill="#ecece4" opacity="0.8"/><rect x="809.6" y="265.8" width="3" height="10" fill="#ecece4" opacity="0.8"/><rect x="818.2" y="260.6" width="3" height="10" fill="#ecece4" opacity="0.8"/><path d="M780 314.5L832 293" stroke="#5f6a45" stroke-width="2.2" opacity="0.8"/><path d="M750 305.2L821.1 259.7L852 248.4L871.7 253.4L928 270.2" stroke="#9aa888" stroke-width="1.3" fill="none"/><defs><linearGradient id="rw" x1="0" y1="0" x2="0" y2="1"><stop offset="0" stop-color="#beb89c"/><stop offset="0.7" stop-color="#aaa692"/><stop offset="1" stop-color="#8a9aa8"/></linearGradient></defs><polygon points="809,400.5 856.4,368 910,333 949,307.5 949.3,340 880,387.5 809,438.5" fill="url(#rw)" /><path d="M818 430L947 344" stroke="#7a8a98" stroke-width="2" opacity="0.35"/><path d="M857.5 367.5L949 306" stroke="#d8d2b0" stroke-width="1.5" opacity="0.8"/><rect x="812.0" y="396.8" width="3" height="2.6" fill="#d6d0b4" transform="rotate(-34 812.0 399.0)"/><rect x="822.3" y="389.8" width="3" height="2.6" fill="#d6d0b4" transform="rotate(-34 822.3 392.0)"/><rect x="832.6" y="382.9" width="3" height="2.6" fill="#d6d0b4" transform="rotate(-34 832.6 385.1)"/><rect x="842.9" y="375.9" width="3" height="2.6" fill="#d6d0b4" transform="rotate(-34 842.9 378.1)"/><rect x="853.2" y="369.0" width="3" height="2.6" fill="#d6d0b4" transform="rotate(-34 853.2 371.2)"/><rect x="863.5" y="362.0" width="3" height="2.6" fill="#d6d0b4" transform="rotate(-34 863.5 364.2)"/><rect x="873.8" y="355.0" width="3" height="2.6" fill="#d6d0b4" transform="rotate(-34 873.8 357.2)"/><rect x="884.2" y="348.1" width="3" height="2.6" fill="#d6d0b4" transform="rotate(-34 884.2 350.3)"/><rect x="894.5" y="341.1" width="3" height="2.6" fill="#d6d0b4" transform="rotate(-34 894.5 343.3)"/><rect x="904.8" y="334.1" width="3" height="2.6" fill="#d6d0b4" transform="rotate(-34 904.8 336.3)"/><rect x="915.1" y="327.2" width="3" height="2.6" fill="#d6d0b4" transform="rotate(-34 915.1 329.4)"/><rect x="925.4" y="320.2" width="3" height="2.6" fill="#d6d0b4" transform="rotate(-34 925.4 322.4)"/><rect x="935.7" y="313.3" width="3" height="2.6" fill="#d6d0b4" transform="rotate(-34 935.7 315.5)"/><rect x="946.0" y="306.3" width="3" height="2.6" fill="#d6d0b4" transform="rotate(-34 946.0 308.5)"/><path d="M832.0 413.5l6 -4" stroke="#5a6470" stroke-width="1.6" opacity="0.7"/><path d="M852.0 400.5l6 -4" stroke="#5a6470" stroke-width="1.6" opacity="0.7"/><path d="M872.0 387.5l6 -4" stroke="#5a6470" stroke-width="1.6" opacity="0.7"/><path d="M892.0 374.5l6 -4" stroke="#5a6470" stroke-width="1.6" opacity="0.7"/><path d="M912.0 361.5l6 -4" stroke="#5a6470" stroke-width="1.6" opacity="0.7"/><path d="M932.0 348.5l6 -4" stroke="#5a6470" stroke-width="1.6" opacity="0.7"/><polygon points="691,325.5 751.3,304.4 856.4,368.2 809,400.7" fill="#b4b1a6" /><polygon points="719.4,320.3 751.3,306.3 856.4,368.2 839.5,373.8 785,358.8 762.5,342 736.3,330.7" fill="#8f836a" /><polygon points="745,318 770,330 800,352 780,350 760,338" fill="#7d735e" opacity="0.7"/><polygon points="717.5,322 735,317.5 744,330 738,337 720,333" fill="#cac7bd" /><polygon points="760,358 790,366 812,385 795,392 772,380" fill="#c0bdb3" opacity="0.8"/><path d="M751.3 306.3L856.4 368.2" stroke="#aaa28a" stroke-width="2.6"/><path d="M809 400.7L856.4 368.2" stroke="#cfc9b4" stroke-width="2" opacity="0.8"/><path d="M692 325L758 298" stroke="#7c98ae" stroke-width="3.5" opacity="0.85"/><polygon points="681,342 692,325 810,402 810,439 770.7,415 770.7,375.6 703,344 688.6,349.4" fill="#939aa0" /><polygon points="688.6,349.4 703,344 770.7,375.6 770.7,412.8 744.4,423.8 709.4,421.6 689.7,402" fill="#7f786a" /><polygon points="698,357 710,352 762,381 762,407 745,416 712,414 697,397" fill="#6f7078" /><polygon points="704,374 722,372 732,380 728,392 706,389" fill="#3b5285" /><polygon points="735,375 760,386 760,405 738,396" fill="#8a8780" /><path d="M716 360V412M726 365V390M752 378V405" stroke="#9a9488" stroke-width="2" opacity="0.7"/><path d="M730 424V408a7.5 7 0 0 1 15 0V424z" fill="#2c3844"/><path d="M728 424V407a9.5 9 0 0 1 19 0V424" fill="none" stroke="#8f887a" stroke-width="2"/><polygon points="690,388 700,385 708,412 694,410" fill="#6a5a78" /><path d="M697 357L710 351L770.7 379" stroke="#a09888" stroke-width="3.2" fill="none"/><path d="M692 325L810 402" stroke="#d2ccb6" stroke-width="1.4" opacity="0.75"/><g clip-path="url(#cb)"><rect x="670" y="240" width="340" height="210" filter="url(#spw)" opacity="0.07"/><rect x="670" y="240" width="340" height="210" filter="url(#spk)" opacity="0.18"/></g></svg>
<div class="t" style="left:818.5px;top:65.86px;font-size:8.2px;color:#e8e8e8;">3D</div>
<svg style="left:603px;top:62px" width="30" height="12" viewBox="0 0 30 12"><circle cx="5.5" cy="6" r="4.2" fill="#3a3a3a"/><path d="M3.5 4l4 4M7.5 4l-4 4" stroke="#eee" stroke-width="1.3"/><circle cx="17.5" cy="6" r="4.2" fill="#3a3a3a"/><rect x="14.8" y="5.5" width="4" height="3" rx="0.6" fill="none" stroke="#eee" stroke-width="0.9"/><path d="M16.3 5.2V4h4v3h-1.2" fill="none" stroke="#eee" stroke-width="0.9"/></svg>
<div class="a" style="left:607.5px;top:77.5px;width:62.5px;height:12.5px;background:linear-gradient(#636363,#575757);border-radius:3.5px;box-shadow:0 0.5px 0 #2a2a2a"></div>
<div class="a" style="left:659.0px;top:78.5px;width:10px;height:10.5px;background:linear-gradient(#2b85f5,#1a6ad8);border-radius:3px"></div>
<svg style="left:659.0px;top:78.5px" width="10" height="10.5" viewBox="0 0 10 10.5"><path d="M3 4.05l2-2 2 2M3 6.45l2 2 2-2" fill="none" stroke="#fff" stroke-width="0.9"/></svg>
<div class="t" style="left:612.0px;top:80.38px;font-size:8px;color:#e6e6e6;">Fronte</div>
<div class="a" style="left:607.5px;top:93.3px;width:62.5px;height:12.5px;background:linear-gradient(#636363,#575757);border-radius:3.5px;box-shadow:0 0.5px 0 #2a2a2a"></div>
<div class="a" style="left:659.0px;top:94.3px;width:10px;height:10.5px;background:linear-gradient(#2b85f5,#1a6ad8);border-radius:3px"></div>
<svg style="left:659.0px;top:94.3px" width="10" height="10.5" viewBox="0 0 10 10.5"><path d="M3 4.05l2-2 2 2M3 6.45l2 2 2-2" fill="none" stroke="#fff" stroke-width="0.9"/></svg>
<div class="t" style="left:612.0px;top:96.18px;font-size:8px;color:#e6e6e6;">Prospettiva</div>
<svg style="left:678px;top:75px" width="16" height="34" viewBox="0 0 16 34"><path d="M10.5 2.5L3.5 8.5L10.5 15" fill="none" stroke="#8a8a8a" stroke-width="1"/><path d="M10 3a9 9 0 0 1 0 11.5" fill="none" stroke="#d42828" stroke-width="1.3"/><rect x="4" y="22" width="10" height="9.6" fill="none" stroke="#555" stroke-width="1"/></svg>
<div class="a" style="left:701.25px;top:82.3px;width:250.35000000000002px;height:2px;background:#474747"></div>
<div class="a" style="left:700.65px;top:80.5px;width:1.2px;height:5.6px;background:#555"></div>
<div class="a" style="left:731.9499999999999px;top:80.5px;width:1.2px;height:5.6px;background:#555"></div>
<div class="a" style="left:763.25px;top:80.5px;width:1.2px;height:5.6px;background:#555"></div>
<div class="a" style="left:794.55px;top:80.5px;width:1.2px;height:5.6px;background:#555"></div>
<div class="a" style="left:825.85px;top:80.5px;width:1.2px;height:5.6px;background:#555"></div>
<div class="a" style="left:857.15px;top:80.5px;width:1.2px;height:5.6px;background:#555"></div>
<div class="a" style="left:888.4499999999999px;top:80.5px;width:1.2px;height:5.6px;background:#555"></div>
<div class="a" style="left:919.75px;top:80.5px;width:1.2px;height:5.6px;background:#555"></div>
<div class="a" style="left:951.05px;top:80.5px;width:1.2px;height:5.6px;background:#555"></div>
<div class="a" style="left:701.25px;top:98.4px;width:250.35000000000002px;height:2px;background:#474747"></div>
<div class="a" style="left:700.65px;top:96.60000000000001px;width:1.2px;height:5.6px;background:#555"></div>
<div class="a" style="left:728.0px;top:96.60000000000001px;width:1.2px;height:5.6px;background:#555"></div>
<div class="a" style="left:755.35px;top:96.60000000000001px;width:1.2px;height:5.6px;background:#555"></div>
<div class="a" style="left:782.6999999999999px;top:96.60000000000001px;width:1.2px;height:5.6px;background:#555"></div>
<div class="a" style="left:810.05px;top:96.60000000000001px;width:1.2px;height:5.6px;background:#555"></div>
<div class="a" style="left:837.4px;top:96.60000000000001px;width:1.2px;height:5.6px;background:#555"></div>
<div class="a" style="left:864.75px;top:96.60000000000001px;width:1.2px;height:5.6px;background:#555"></div>
<div class="a" style="left:892.1px;top:96.60000000000001px;width:1.2px;height:5.6px;background:#555"></div>
<div class="a" style="left:919.4499999999999px;top:96.60000000000001px;width:1.2px;height:5.6px;background:#555"></div>
<div class="a" style="left:951.0px;top:96.60000000000001px;width:1.2px;height:5.6px;background:#555"></div>
<div class="a" style="left:811.9px;top:77px;width:5px;height:12.5px;background:#a5a5a5;border-radius:2.5px"></div>
<div class="a" style="left:708.75px;top:93.1px;width:5.25px;height:12.5px;background:#a5a5a5;border-radius:2.5px"></div>
<svg style="left:969.5px;top:75px" width="36" height="36" viewBox="0 0 36 36"><defs><radialGradient id="kg" cx="0.4" cy="0.3" r="0.8"><stop offset="0" stop-color="#e4e4e4"/><stop offset="1" stop-color="#9a9a9a"/></radialGradient></defs><path d="M31.50 18.00L34.00 18.00" stroke="#9a9a9a" stroke-width="1"/><path d="M31.72 21.68L33.07 22.04" stroke="#9a9a9a" stroke-width="0.7"/><path d="M30.30 25.10L31.51 25.80" stroke="#9a9a9a" stroke-width="0.7"/><path d="M28.04 28.04L29.03 29.03" stroke="#9a9a9a" stroke-width="0.7"/><path d="M25.10 30.30L25.80 31.51" stroke="#9a9a9a" stroke-width="0.7"/><path d="M21.68 31.72L22.04 33.07" stroke="#9a9a9a" stroke-width="0.7"/><path d="M18.00 31.50L18.00 34.00" stroke="#9a9a9a" stroke-width="1"/><path d="M14.32 31.72L13.96 33.07" stroke="#9a9a9a" stroke-width="0.7"/><path d="M10.90 30.30L10.20 31.51" stroke="#9a9a9a" stroke-width="0.7"/><path d="M7.96 28.04L6.97 29.03" stroke="#9a9a9a" stroke-width="0.7"/><path d="M5.70 25.10L4.49 25.80" stroke="#9a9a9a" stroke-width="0.7"/><path d="M4.28 21.68L2.93 22.04" stroke="#9a9a9a" stroke-width="0.7"/><path d="M4.50 18.00L2.00 18.00" stroke="#9a9a9a" stroke-width="1"/><path d="M4.28 14.32L2.93 13.96" stroke="#9a9a9a" stroke-width="0.7"/><path d="M5.70 10.90L4.49 10.20" stroke="#9a9a9a" stroke-width="0.7"/><path d="M7.96 7.96L6.97 6.97" stroke="#9a9a9a" stroke-width="0.7"/><path d="M10.90 5.70L10.20 4.49" stroke="#9a9a9a" stroke-width="0.7"/><path d="M14.32 4.28L13.96 2.93" stroke="#9a9a9a" stroke-width="0.7"/><path d="M18.00 4.50L18.00 2.00" stroke="#9a9a9a" stroke-width="1"/><path d="M21.68 4.28L22.04 2.93" stroke="#9a9a9a" stroke-width="0.7"/><path d="M25.10 5.70L25.80 4.49" stroke="#9a9a9a" stroke-width="0.7"/><path d="M28.04 7.96L29.03 6.97" stroke="#9a9a9a" stroke-width="0.7"/><path d="M30.30 10.90L31.51 10.20" stroke="#9a9a9a" stroke-width="0.7"/><path d="M31.72 14.32L33.07 13.96" stroke="#9a9a9a" stroke-width="0.7"/><circle cx="18" cy="18" r="11.8" fill="url(#kg)"/><circle cx="18" cy="25.5" r="2.3" fill="#b0b0b0" stroke="#888" stroke-width="0.6"/></svg>
<div class="a" style="left:603px;top:590px;width:417px;height:31px;background:#303030"></div>
<div class="a" style="left:606.5px;top:594.5px;width:25.5px;height:15.5px;background:#2c2c2c;border:1px solid #3a3a3a"></div>
<div class="t" style="left:609.8px;top:599.31px;font-size:7.2px;color:#dcdcdc;">Copia</div>
<div class="a" style="left:634.5px;top:594.5px;width:24.5px;height:15.5px;background:#2c2c2c;border:1px solid #3a3a3a"></div>
<div class="t" style="left:637.8px;top:599.31px;font-size:7.2px;color:#dcdcdc;">Salva</div>
<div class="a" style="left:662px;top:594.5px;width:17px;height:15.5px;background:#2c2c2c;border:1px solid #3a3a3a"></div>
<div class="a" style="left:683px;top:594.5px;width:13.5px;height:15.5px;background:#2c2c2c;border:1px solid #3a3a3a"></div>
<div class="a" style="left:699px;top:594.5px;width:16px;height:15.5px;background:#2c2c2c;border:1px solid #3a3a3a"></div>
<svg style="left:662px;top:594.5px" width="54" height="16" viewBox="0 0 54 16"><path d="M12.5 5.5a5 5 0 1 0 1 4" fill="none" stroke="#8a8a8a" stroke-width="1.4"/><path d="M10.5 4.5h4v-3.5z" fill="#8a8a8a"/><circle cx="27.8" cy="8" r="5.5" fill="#2a6ab0"/><path d="M23 6a5 3 0 0 1 9.5 0" fill="none" stroke="#e8e8e8" stroke-width="1.4"/><path d="M22.6 9a5.5 5 0 0 0 9 3" fill="none" stroke="#8ac090" stroke-width="1.4"/><path d="M42 4.5l6 6M41 4h4.5l-4.5 4.5z" stroke="#777" stroke-width="1.6" fill="#777"/></svg>
<div class="a" style="left:731.5px;top:598.5px;width:9.5px;height:9.5px;background:#1f7ae8;border-radius:50%"></div>
<div class="a" style="left:734.3px;top:601.3px;width:3.9px;height:3.9px;background:#fff;border-radius:50%"></div>
<div class="t" style="left:744px;top:599.63px;font-size:8px;color:#e2e2e2;">Orbitale</div>
<div class="a" style="left:876px;top:598.5px;width:9.5px;height:9.5px;background:#666;border-radius:50%"></div>
<div class="t" style="left:889px;top:599.63px;font-size:8px;color:#e2e2e2;">Soggettiva</div>
<div class="a" style="left:606px;top:613.5px;width:414px;height:1.2px;background:#999"></div>
<div class="a" style="left:58px;top:568px;width:160px;height:46px;background:#353535;border:1px solid #3f3f3f;border-radius:3px"></div>
<div class="a" style="left:79.5px;top:561px;width:116.5px;height:14px;background:#575757;border-radius:3.5px"></div>
<div class="a" style="left:79.5px;top:561px;width:41.5px;height:14px;background:#1f7ae8;border-radius:3.5px 0 0 3.5px"></div>
<div class="a" style="left:162.5px;top:564px;width:1px;height:8px;background:#1f7ae8"></div>
<div class="t" style="left:85.5px;top:565.3px;font-size:7.8px;color:#fff;">Assolute</div>
<div class="t" style="left:129px;top:565.3px;font-size:7.8px;color:#e6e6e6;">Relative</div>
<div class="t" style="left:171px;top:565.3px;font-size:7.8px;color:#e6e6e6;">Polari</div>
<div class="a" style="left:65.3px;top:582px;width:9.2px;height:9.4px;background:#1f7ae8;border-radius:2px"></div>
<svg style="left:65.3px;top:582px" width="9.2" height="9.4" viewBox="0 0 9.2 9.4"><path d="M2 4.8l2 2.4 3.6-5" fill="none" stroke="#fff" stroke-width="1.3"/></svg>
<div class="t" style="left:77.5px;top:584.3px;font-size:7.8px;color:#bbb;">X</div>
<div class="a" style="left:88px;top:581px;width:46px;height:10.5px;background:#262626"></div>
<div class="t" style="left:88.8px;top:583.3px;font-size:7.8px;color:#f0f0f0;">1430.0</div>
<div class="a" style="left:145px;top:582px;width:9.2px;height:9.4px;background:#1f7ae8;border-radius:2px"></div>
<svg style="left:145px;top:582px" width="9.2" height="9.4" viewBox="0 0 9.2 9.4"><path d="M2 4.8l2 2.4 3.6-5" fill="none" stroke="#fff" stroke-width="1.3"/></svg>
<div class="t" style="left:157.5px;top:584.3px;font-size:7.8px;color:#bbb;">Y</div>
<div class="a" style="left:167px;top:581px;width:45px;height:10.5px;background:#262626"></div>
<div class="t" style="left:168px;top:583.3px;font-size:7.8px;color:#f0f0f0;">3497.6</div>
<div class="a" style="left:65.3px;top:594px;width:9.2px;height:9.4px;background:#1f7ae8;border-radius:2px"></div>
<svg style="left:65.3px;top:594px" width="9.2" height="9.4" viewBox="0 0 9.2 9.4"><path d="M2 4.8l2 2.4 3.6-5" fill="none" stroke="#fff" stroke-width="1.3"/></svg>
<div class="t" style="left:77.5px;top:596.3px;font-size:7.8px;color:#bbb;">Z</div>
<div class="a" style="left:88px;top:593px;width:46px;height:10.5px;background:#262626"></div>
<div class="t" style="left:88.8px;top:595.3px;font-size:7.8px;color:#f0f0f0;">0</div>
<div class="a" style="left:170.5px;top:596px;width:37.5px;height:10.5px;background:linear-gradient(#666,#5a5a5a);border-radius:2.5px"></div>
<div class="t" style="left:173px;top:598.74px;font-size:7.4px;color:#f0f0f0;">Conferma</div>
<div class="a" style="left:225px;top:568px;width:220px;height:33px;background:#353535;border:1px solid #3f3f3f;border-radius:3px"></div>
<div class="a" style="left:281px;top:562px;width:106px;height:13.5px;background:#575757;border-radius:3.5px"></div>
<div class="a" style="left:281px;top:562px;width:32px;height:13.5px;background:#1f7ae8;border-radius:3.5px 0 0 3.5px"></div>
<div class="a" style="left:342.5px;top:565px;width:1px;height:8px;background:#1f7ae8"></div>
<div class="t" style="left:287.5px;top:565.3px;font-size:7.8px;color:#fff;">Linee</div>
<div class="t" style="left:320.5px;top:565.3px;font-size:7.8px;color:#e6e6e6;">Aree</div>
<div class="t" style="left:351.5px;top:565.3px;font-size:7.8px;color:#e6e6e6;">Materiale</div>
<div class="a" style="left:227.7px;top:579.2px;width:19.4px;height:17.4px;background:#ff00ff;border:1px solid #111"></div>
<div class="a" style="left:252.8px;top:579px;width:85.8px;height:18.5px;background:#ff00ff;border:1px solid #ddd"></div>
<div class="a" style="left:344px;top:580.5px;width:43px;height:13.5px;background:#555;border-radius:3.5px"></div>
<div class="a" style="left:376px;top:581.7px;width:10px;height:11.1px;background:linear-gradient(#2b85f5,#1a6ad8);border-radius:3px"></div>
<svg style="left:376px;top:581.7px" width="10" height="11.1" viewBox="0 0 10 11.1"><path d="M3 4.55l2-2 2 2M3 6.55l2 2 2-2" fill="none" stroke="#fff" stroke-width="0.9"/></svg>
<div class="t" style="left:345.5px;top:583.85px;font-size:7.8px;color:#e0e0e0;">0</div>
<div class="a" style="left:352px;top:586.85px;width:16px;height:0.9px;background:#ddd"></div>
<div class="a" style="left:397px;top:580.5px;width:42px;height:13.5px;background:#555;border-radius:3.5px"></div>
<div class="a" style="left:428px;top:581.7px;width:10px;height:11.1px;background:linear-gradient(#2b85f5,#1a6ad8);border-radius:3px"></div>
<svg style="left:428px;top:581.7px" width="10" height="11.1" viewBox="0 0 10 11.1"><path d="M3 4.55l2-2 2 2M3 6.55l2 2 2-2" fill="none" stroke="#fff" stroke-width="0.9"/></svg>
<div class="t" style="left:398.5px;top:583.85px;font-size:7.8px;color:#e0e0e0;">1</div>
<div class="a" style="left:405px;top:586.85px;width:16px;height:0.9px;background:#ddd"></div>
<div class="t" style="left:238.5px;top:604.3px;font-size:7.8px;color:#e2e2e2;">Trasparenza</div>
<div class="a" style="left:293px;top:606px;width:137px;height:2.3px;background:#1f7ae8;border-radius:1px"></div>
<div class="a" style="left:423.5px;top:600.5px;width:13px;height:13px;background:#9d9d9d;border-radius:50%"></div>
<div class="a" style="left:451.5px;top:561px;width:80.5px;height:53.5px;background:#353535;border:1px solid #3f3f3f;border-radius:3px"></div>
<div class="a" style="left:455px;top:566.5px;width:24px;height:24.5px;background:#2a2a2a;border:1px solid #5a5a5a"></div>
<svg style="left:455px;top:566.5px" width="24" height="25" viewBox="0 0 24 25"><path d="M1 9.5h22" stroke="#1fa01f" stroke-width="1.6"/><path d="M8 8l3-5 2 2 1.5 3z" fill="#bbb"/><path d="M14 15l3 3.5 4.5-4" fill="none" stroke="#eee" stroke-width="1.4"/></svg>
<div class="a" style="left:485px;top:565px;width:13.3px;height:13.7px;background:#e6e6e6"></div>
<div class="t" style="left:488.3px;top:568.93px;font-size:8px;color:#777;">V</div>
<div class="a" style="left:500px;top:565px;width:13.3px;height:13.7px;background:#e6e6e6"></div>
<div class="t" style="left:503.3px;top:568.93px;font-size:8px;color:#777;">A</div>
<div class="a" style="left:515px;top:565px;width:13.3px;height:13.7px;background:#e6e6e6"></div>
<div class="t" style="left:518.3px;top:568.93px;font-size:8px;color:#777;">C</div>
<div class="a" style="left:485px;top:580px;width:13.3px;height:13.7px;background:#e6e6e6"></div>
<div class="t" style="left:490.5px;top:583.93px;font-size:8px;color:#777;">I</div>
<div class="a" style="left:500px;top:580px;width:13.3px;height:13.7px;background:#2f2f2f"></div>
<div class="t" style="left:503.3px;top:583.93px;font-size:8px;color:#bbb;">G</div>
<div class="a" style="left:515px;top:580px;width:13.3px;height:13.7px;background:#e6e6e6"></div>
<div class="t" style="left:518.3px;top:583.93px;font-size:8px;color:#777;">T</div>
<div class="a" style="left:455px;top:596px;width:31px;height:13px;background:#2e2e2e;border:1px solid #383838"></div>
<div class="t" style="left:461.5px;top:599.8px;font-size:7.8px;color:#e0e0e0;">Orto</div>
<div class="a" style="left:489px;top:596px;width:23px;height:13px;background:#2e2e2e;border:1px solid #383838"></div>
<div class="t" style="left:491.5px;top:599.8px;font-size:7.8px;color:#e0e0e0;">Paral</div>
<div class="a" style="left:515px;top:596px;width:13px;height:13px;background:#2e2e2e;border:1px solid #383838"></div>
<div class="t" style="left:518.5px;top:599.8px;font-size:7.8px;color:#e0e0e0;">O</div>
<div class="a" style="left:538px;top:561px;width:47px;height:53.5px;background:#353535;border:1px solid #3f3f3f;border-radius:3px"></div>
<svg style="left:541.8px;top:560.8px" width="40" height="40" viewBox="0 0 40 40"><defs><radialGradient id="kg2" cx="0.4" cy="0.3" r="0.8"><stop offset="0" stop-color="#e2e2e2"/><stop offset="1" stop-color="#a0a0a0"/></radialGradient></defs><path d="M35.50 20.00L38.00 20.00" stroke="#9a9a9a" stroke-width="1"/><path d="M35.89 23.16L37.16 23.41" stroke="#9a9a9a" stroke-width="0.7"/><path d="M34.97 26.20L36.17 26.70" stroke="#9a9a9a" stroke-width="0.7"/><path d="M33.47 29.00L34.55 29.72" stroke="#9a9a9a" stroke-width="0.7"/><path d="M31.46 31.46L32.37 32.37" stroke="#9a9a9a" stroke-width="0.7"/><path d="M29.00 33.47L29.72 34.55" stroke="#9a9a9a" stroke-width="0.7"/><path d="M26.20 34.97L26.70 36.17" stroke="#9a9a9a" stroke-width="0.7"/><path d="M23.16 35.89L23.41 37.16" stroke="#9a9a9a" stroke-width="0.7"/><path d="M20.00 35.50L20.00 38.00" stroke="#9a9a9a" stroke-width="1"/><path d="M16.84 35.89L16.59 37.16" stroke="#9a9a9a" stroke-width="0.7"/><path d="M13.80 34.97L13.30 36.17" stroke="#9a9a9a" stroke-width="0.7"/><path d="M11.00 33.47L10.28 34.55" stroke="#9a9a9a" stroke-width="0.7"/><path d="M8.54 31.46L7.63 32.37" stroke="#9a9a9a" stroke-width="0.7"/><path d="M6.53 29.00L5.45 29.72" stroke="#9a9a9a" stroke-width="0.7"/><path d="M5.03 26.20L3.83 26.70" stroke="#9a9a9a" stroke-width="0.7"/><path d="M4.11 23.16L2.84 23.41" stroke="#9a9a9a" stroke-width="0.7"/><path d="M4.50 20.00L2.00 20.00" stroke="#9a9a9a" stroke-width="1"/><path d="M4.11 16.84L2.84 16.59" stroke="#9a9a9a" stroke-width="0.7"/><path d="M5.03 13.80L3.83 13.30" stroke="#9a9a9a" stroke-width="0.7"/><path d="M6.53 11.00L5.45 10.28" stroke="#9a9a9a" stroke-width="0.7"/><path d="M8.54 8.54L7.63 7.63" stroke="#9a9a9a" stroke-width="0.7"/><path d="M11.00 6.53L10.28 5.45" stroke="#9a9a9a" stroke-width="0.7"/><path d="M13.80 5.03L13.30 3.83" stroke="#9a9a9a" stroke-width="0.7"/><path d="M16.84 4.11L16.59 2.84" stroke="#9a9a9a" stroke-width="0.7"/><path d="M20.00 4.50L20.00 2.00" stroke="#9a9a9a" stroke-width="1"/><path d="M23.16 4.11L23.41 2.84" stroke="#9a9a9a" stroke-width="0.7"/><path d="M26.20 5.03L26.70 3.83" stroke="#9a9a9a" stroke-width="0.7"/><path d="M29.00 6.53L29.72 5.45" stroke="#9a9a9a" stroke-width="0.7"/><path d="M31.46 8.54L32.37 7.63" stroke="#9a9a9a" stroke-width="0.7"/><path d="M33.47 11.00L34.55 10.28" stroke="#9a9a9a" stroke-width="0.7"/><path d="M34.97 13.80L36.17 13.30" stroke="#9a9a9a" stroke-width="0.7"/><path d="M35.89 16.84L37.16 16.59" stroke="#9a9a9a" stroke-width="0.7"/><circle cx="20" cy="20" r="13.2" fill="url(#kg2)"/><circle cx="26.5" cy="26.5" r="2.6" fill="#b8b8b8" stroke="#8a8a8a" stroke-width="0.6"/></svg>
<div class="a" style="left:542px;top:600px;width:39px;height:11px;background:#262626"></div>
<div class="t" style="left:542.5px;top:602.8px;font-size:7.8px;color:#f0f0f0;">315.0000</div>
<div class="a" style="left:586px;top:561px;width:14px;height:53.5px;background:#353535;border:1px solid #3f3f3f;border-radius:3px"></div>
<svg style="left:586px;top:561px" width="14" height="54" viewBox="0 0 14 54"><path d="M9 6v3M8 16v3" stroke="#888" stroke-width="1"/><path d="M4 50l6-6v6z" fill="#777"/></svg>
<div class="a" style="left:207.6px;top:310.7px;width:3.6px;height:3.6px;background:#444;border-radius:50%"></div>
<div class="a" style="left:324.6px;top:557.2px;width:3.6px;height:3.6px;background:#444;border-radius:50%"></div>
<div class="a" style="left:809.8px;top:617.8px;width:3.4px;height:3.4px;background:#444;border-radius:50%"></div>
<div class="a" style="left:0px;top:621px;width:1020px;height:19px;background:#262626;border-top:1px solid #3a3a3a;border-radius:0 0 6px 0"></div>
<div class="a" style="left:1020px;top:16px;width:4px;height:624px;background:#1e1e1e;border-left:1px solid #3c3c3c"></div>
<div class="a" style="left:1021.5px;top:596px;width:2.5px;height:10px;background:#d8d8d8"></div>
<div class="a" style="left:1021.5px;top:603px;width:2.5px;height:20px;background:#8a8a30"></div>
<div class="t" style="left:-1.66px;top:626.71px;font-family:'Liberation Mono',monospace;font-size:10.3px;color:#e6e6e6;transform:scaleX(0.8440);transform-origin:0 0">x:     2847.4 y:     1417.4 z:      0.0 | l:   2517.2 a: 304.2699 | Δx:   1417.4 Δy:  -2080.2  Piano 1  Scala 1:280.875 Quota 0.0  Selezione: nessuna</div>
<div class="a" style="left:487.84999999999997px;top:628.1px;width:1.3px;height:8px;background:#1a1ad8"></div>
<div class="a" style="left:534.9px;top:628.1px;width:1.3px;height:8px;background:#1a1ad8"></div>
<div class="a" style="left:676.4px;top:628.1px;width:1.3px;height:8px;background:#1a1ad8"></div>
<div class="a" style="left:779.9px;top:628.1px;width:1.3px;height:8px;background:#1a1ad8"></div></div></body></html>
